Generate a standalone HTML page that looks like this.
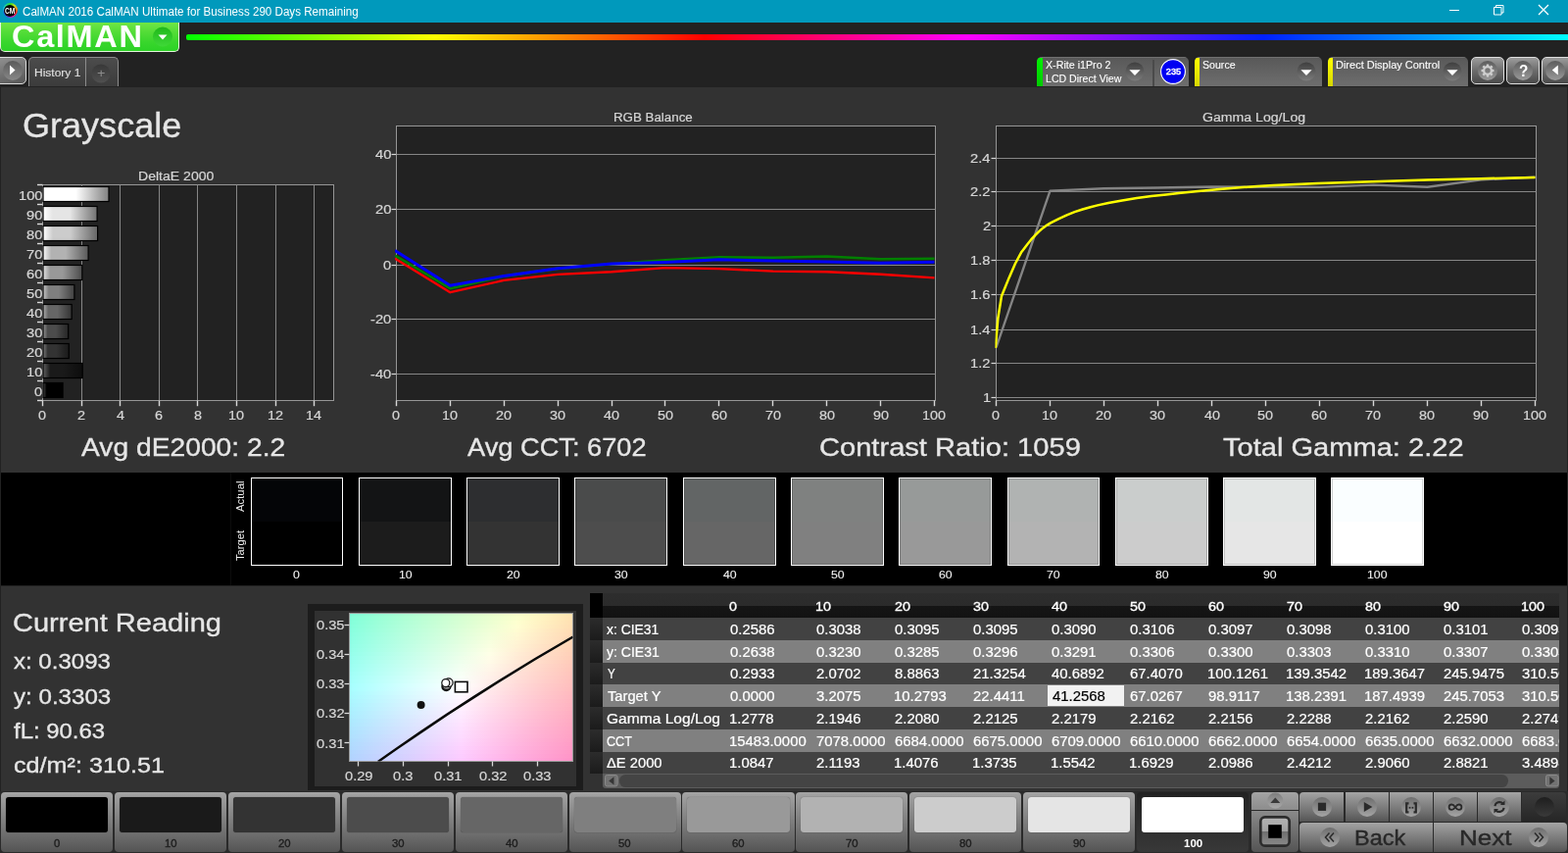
<!DOCTYPE html>
<html lang="en">
<head>
<meta charset="utf-8">
<title>CalMAN 2016 - Grayscale</title>
<style>
html,body{margin:0;padding:0;background:#222;}
body{width:1600px;height:870px;overflow:hidden;font-family:"Liberation Sans",sans-serif;}
#app{position:relative;width:1600px;height:870px;overflow:hidden;will-change:transform;}
.t{position:absolute;white-space:nowrap;line-height:1;transform-origin:0 0;}
svg{position:absolute;overflow:visible;}
svg text{font-family:"Liberation Sans",sans-serif;}

</style>
</head>
<body>
<div id="app">
<div style="position:absolute;left:0px;top:0px;width:1600px;height:23px;background:#0099bc;"></div>
<div style="position:absolute;left:2.7px;top:3.3px;width:15.2px;height:15.2px;border-radius:50%;background:conic-gradient(from 0deg,#30e020 0deg,#c0e020 40deg,#ff9010 75deg,#ff2020 115deg,#e020c0 160deg,#7030f0 200deg,#2050ff 240deg,#20d0e0 290deg,#30e020 360deg);"></div>
<div style="position:absolute;left:4.3px;top:4.9px;width:12px;height:12px;border-radius:50%;background:#040404;"></div>
<div class="t" style="left:5.33px;top:8px;font-size:8.14px;color:#ffffff;transform:scaleX(0.8162);font-weight:bold;">CM</div>
<div class="t" style="left:23.32px;top:6px;font-size:12.65px;color:#ffffff;transform:scaleX(0.9187);">CalMAN 2016 CalMAN Ultimate for Business 290 Days Remaining</div>
<svg style="left:1470px;top:0" width="130" height="23" viewBox="0 0 130 23" fill="none" stroke="#fff" stroke-width="1">
<path d="M9 10.5H19"/>
<path d="M54.500 7.500h7.500v7.500h-7.500z M56.500 7.500v-2h7.500v7.500h-2"/>
<path d="M100 5l10 10M110 5l-10 10" stroke-width="1.250"/></svg>
<div style="position:absolute;left:0px;top:23px;width:1600px;height:65px;background:#222222;"></div>
<div style="position:absolute;left:190px;top:35.3px;width:1410px;height:5.4px;background:linear-gradient(90deg,#00ff00 0%,#ffff00 18%,#ff0000 37.5%,#ff00ff 56.5%,#0020ff 78%,#00ffff 100%);border-radius:2px 0 0 2px;"></div>
<div style="position:absolute;left:0px;top:23px;width:183px;height:29.6px;background:linear-gradient(#70e645 0%,#52dc37 35%,#38d62c 70%,#2cd226 100%);border:1px solid #e4f6dc;border-top:none;border-radius:0 0 5px 5px;box-sizing:border-box;"></div>
<div class="t" style="left:12.10px;top:22px;font-size:31.4px;color:#ffffff;transform:scaleX(1.0355);font-weight:bold;letter-spacing:1.6px;">CalMAN</div>
<svg style="left:155px;top:27px" width="22" height="22" viewBox="0 0 22 22">
<defs><linearGradient id="cmg" x1="0" y1="0" x2="0" y2="1"><stop offset="0" stop-color="#1fb81a"/><stop offset="1" stop-color="#3fd838"/></linearGradient></defs>
<circle cx="11" cy="10.5" r="10" fill="url(#cmg)"/><path d="M6.5 8.5h9l-4.5 5z" fill="#fff"/></svg>
<div style="position:absolute;left:-2px;top:58px;width:29px;height:28px;background:linear-gradient(160deg,#909090,#565656);border:1px solid #dcdcdc;border-radius:0 5px 5px 0;box-sizing:border-box;"></div>
<svg style="left:3px;top:62px" width="20" height="20" viewBox="0 0 20 20">
<defs><linearGradient id="pbg" x1="0" y1="0" x2="0" y2="1"><stop offset="0" stop-color="#5a5a5a"/><stop offset="1" stop-color="#888"/></linearGradient></defs>
<circle cx="10" cy="10" r="10" fill="url(#pbg)"/><path d="M7 4.5v10l5.5-5z" fill="#fff"/></svg>
<div style="position:absolute;left:29px;top:58px;width:92px;height:30.5px;background:linear-gradient(#4c4c4c,#3b3b3b);border:1px solid #8c8c8c;border-bottom:none;border-radius:5px 5px 0 0;box-sizing:border-box;"></div>
<div style="position:absolute;left:87px;top:59px;width:1px;height:29.5px;background:#8c8c8c;"></div>
<div class="t" style="left:34.64px;top:68px;font-size:11.63px;color:#e0e0e0;transform:scaleX(1.0332);-webkit-text-stroke:0.1px #e0e0e0;">History 1</div>
<svg style="left:93px;top:65px" width="20" height="20" viewBox="0 0 20 20">
<defs><linearGradient id="plg" x1="0" y1="0" x2="0" y2="1"><stop offset="0" stop-color="#383838"/><stop offset="1" stop-color="#505050"/></linearGradient></defs>
<circle cx="10" cy="10" r="9.5" fill="url(#plg)"/></svg>
<div class="t" style="left:98.88px;top:70px;font-size:11.92px;color:#8c8c8c;transform:scaleX(1.2108);">+</div>
<svg width="0" height="0" style="left:0;top:0"><defs><linearGradient id="ddg" x1="0" y1="0" x2="0" y2="1"><stop offset="0" stop-color="#3e3e3e"/><stop offset="1" stop-color="#7c7c7c"/></linearGradient></defs></svg>
<div style="position:absolute;left:1058.4px;top:58px;width:154.6px;height:30px;background:linear-gradient(#7c7c7c 0,#595959 1.5px,#6e6e6e 100%);border-radius:5px 5px 0 0;overflow:hidden;"><div style="position:absolute;left:0;top:1px;width:5.2px;height:29px;background:linear-gradient(#00f000,#00cc00)"></div><div style="position:absolute;left:118px;top:3px;width:2px;height:27px;background:#4a4a4a"></div></div>
<div class="t" style="left:1066.83px;top:61px;font-size:11.05px;color:#ffffff;transform:scaleX(0.9668);-webkit-text-stroke:0.1px #ffffff;">X-Rite i1Pro 2</div>
<div class="t" style="left:1066.65px;top:75px;font-size:11.05px;color:#ffffff;transform:scaleX(0.9575);-webkit-text-stroke:0.1px #ffffff;">LCD Direct View</div>
<svg style="left:1147.6px;top:63.2px" width="20" height="20" viewBox="0 0 20 20">
<circle cx="10" cy="10" r="9.500" fill="url(#ddg)"/><path d="M4.400 8.300h11.200l-5.600 5.800z" fill="#fff"/></svg>
<svg style="left:1184.300px;top:60px" width="26" height="26" viewBox="0 0 26 26"><circle cx="13" cy="13" r="12.400" fill="#0000f2" stroke="#fff" stroke-width="1.100"/></svg>
<div class="t" style="left:1189.84px;top:69px;font-size:9.16px;color:#ffffff;-webkit-text-stroke:0.45px #ffffff;">235</div>
<div style="position:absolute;left:1219px;top:58px;width:129.5px;height:30px;background:linear-gradient(#7c7c7c 0,#595959 1.5px,#6e6e6e 100%);border-radius:5px 5px 0 0;overflow:hidden;"><div style="position:absolute;left:0;top:1px;width:5.2px;height:29px;background:linear-gradient(#ffff00,#d6d600)"></div></div>
<div class="t" style="left:1227.12px;top:61px;font-size:11.05px;color:#ffffff;transform:scaleX(0.9594);-webkit-text-stroke:0.1px #ffffff;">Source</div>
<svg style="left:1322.6px;top:63.2px" width="20" height="20" viewBox="0 0 20 20">
<circle cx="10" cy="10" r="9.500" fill="url(#ddg)"/><path d="M4.400 8.300h11.200l-5.600 5.800z" fill="#fff"/></svg>
<div style="position:absolute;left:1354.5px;top:58px;width:143.5px;height:30px;background:linear-gradient(#7c7c7c 0,#595959 1.5px,#6e6e6e 100%);border-radius:5px 5px 0 0;overflow:hidden;"><div style="position:absolute;left:0;top:1px;width:5.2px;height:29px;background:linear-gradient(#ffff00,#d6d600)"></div></div>
<div class="t" style="left:1362.87px;top:61px;font-size:11.05px;color:#ffffff;transform:scaleX(0.9943);-webkit-text-stroke:0.1px #ffffff;">Direct Display Control</div>
<svg style="left:1471.9px;top:63.2px" width="20" height="20" viewBox="0 0 20 20">
<circle cx="10" cy="10" r="9.500" fill="url(#ddg)"/><path d="M4.400 8.300h11.200l-5.600 5.800z" fill="#fff"/></svg>
<div style="position:absolute;left:1501px;top:58px;width:34px;height:28px;background:linear-gradient(#9c9c9c,#6c6c6c 50%,#4a4a4a);border:1px solid #dedede;border-radius:5px;box-sizing:border-box;"></div>
<div style="position:absolute;left:1537px;top:58px;width:34px;height:28px;background:linear-gradient(#9c9c9c,#6c6c6c 50%,#4a4a4a);border:1px solid #dedede;border-radius:5px;box-sizing:border-box;"></div>
<div style="position:absolute;left:1573px;top:58px;width:34px;height:28px;background:linear-gradient(#9c9c9c,#6c6c6c 50%,#4a4a4a);border:1px solid #dedede;border-radius:5px;box-sizing:border-box;"></div>
<svg width="0" height="0" style="left:0;top:0"><defs><linearGradient id="bcg" x1="0" y1="0" x2="0" y2="1"><stop offset="0" stop-color="#5c5c5c"/><stop offset="1" stop-color="#9a9a9a"/></linearGradient></defs></svg>
<svg style="left:1507.8px;top:62px" width="20" height="20" viewBox="0 0 20 20"><circle cx="10" cy="10" r="10" fill="url(#bcg)"/><g transform="translate(10,10)" fill="none" stroke="#cfcfcf"><circle r="3.900" stroke-width="2.300"/><path d="M0 -4.500V-6.500" stroke-width="2.500" transform="rotate(0)"/><path d="M0 -4.500V-6.500" stroke-width="2.500" transform="rotate(45)"/><path d="M0 -4.500V-6.500" stroke-width="2.500" transform="rotate(90)"/><path d="M0 -4.500V-6.500" stroke-width="2.500" transform="rotate(135)"/><path d="M0 -4.500V-6.500" stroke-width="2.500" transform="rotate(180)"/><path d="M0 -4.500V-6.500" stroke-width="2.500" transform="rotate(225)"/><path d="M0 -4.500V-6.500" stroke-width="2.500" transform="rotate(270)"/><path d="M0 -4.500V-6.500" stroke-width="2.500" transform="rotate(315)"/></g></svg>
<svg style="left:1544px;top:62px" width="20" height="20" viewBox="0 0 20 20"><circle cx="10" cy="10" r="10" fill="url(#bcg)"/></svg>
<div class="t" style="left:1549.51px;top:64px;font-size:16.28px;color:#ffffff;transform:scaleX(0.9394);font-weight:bold;">?</div>
<svg style="left:1577px;top:62px" width="20" height="20" viewBox="0 0 20 20"><circle cx="10" cy="10" r="10" fill="url(#bcg)"/><path d="M12.800 4.500v10l-6-5z" fill="#fff"/></svg>
<div style="position:absolute;left:0px;top:88px;width:1600px;height:394px;background:#222;"></div>
<div style="position:absolute;left:1px;top:89px;width:1598px;height:393px;background:#323232;"></div>
<div class="t" style="left:23.00px;top:111px;font-size:34.88px;color:#e6e6e6;transform:scaleX(1.0335);-webkit-text-stroke:0.35px #e6e6e6;">Grayscale</div>
<div class="t" style="left:83.25px;top:444px;font-size:25.58px;color:#e6e6e6;transform:scaleX(1.1034);-webkit-text-stroke:0.35px #e6e6e6;">Avg dE2000: 2.2</div>
<div class="t" style="left:477.40px;top:444px;font-size:25.58px;color:#e6e6e6;transform:scaleX(1.0644);-webkit-text-stroke:0.35px #e6e6e6;">Avg CCT: 6702</div>
<div class="t" style="left:835.55px;top:444px;font-size:25.58px;color:#e6e6e6;transform:scaleX(1.1373);-webkit-text-stroke:0.35px #e6e6e6;">Contrast Ratio: 1059</div>
<div class="t" style="left:1247.92px;top:444px;font-size:25.58px;color:#e6e6e6;transform:scaleX(1.1366);-webkit-text-stroke:0.35px #e6e6e6;">Total Gamma: 2.22</div>
<div class="t" style="left:141.37px;top:173px;font-size:13.52px;color:#d6d6d6;transform:scaleX(1.0402);-webkit-text-stroke:0.2px #d6d6d6;">DeltaE 2000</div>
<svg style="left:30px;top:180px" width="320" height="240" viewBox="30 180 320 240">
<defs>
<linearGradient id="bg100" x1="0" y1="0" x2="1" y2="0"><stop offset="0" stop-color="rgb(255,255,255)"/><stop offset="0.18" stop-color="rgb(255,255,255)"/><stop offset="0.5" stop-color="rgb(255,255,255)"/><stop offset="1" stop-color="rgb(128,128,128)"/></linearGradient>
<linearGradient id="bg90" x1="0" y1="0" x2="1" y2="0"><stop offset="0" stop-color="rgb(255,255,255)"/><stop offset="0.18" stop-color="rgb(229,229,229)"/><stop offset="0.5" stop-color="rgb(229,229,229)"/><stop offset="1" stop-color="rgb(114,114,114)"/></linearGradient>
<linearGradient id="bg80" x1="0" y1="0" x2="1" y2="0"><stop offset="0" stop-color="rgb(255,255,255)"/><stop offset="0.18" stop-color="rgb(204,204,204)"/><stop offset="0.5" stop-color="rgb(204,204,204)"/><stop offset="1" stop-color="rgb(102,102,102)"/></linearGradient>
<linearGradient id="bg70" x1="0" y1="0" x2="1" y2="0"><stop offset="0" stop-color="rgb(248,248,248)"/><stop offset="0.18" stop-color="rgb(178,178,178)"/><stop offset="0.5" stop-color="rgb(178,178,178)"/><stop offset="1" stop-color="rgb(89,89,89)"/></linearGradient>
<linearGradient id="bg60" x1="0" y1="0" x2="1" y2="0"><stop offset="0" stop-color="rgb(223,223,223)"/><stop offset="0.18" stop-color="rgb(153,153,153)"/><stop offset="0.5" stop-color="rgb(153,153,153)"/><stop offset="1" stop-color="rgb(76,76,76)"/></linearGradient>
<linearGradient id="bg50" x1="0" y1="0" x2="1" y2="0"><stop offset="0" stop-color="rgb(197,197,197)"/><stop offset="0.18" stop-color="rgb(127,127,127)"/><stop offset="0.5" stop-color="rgb(127,127,127)"/><stop offset="1" stop-color="rgb(64,64,64)"/></linearGradient>
<linearGradient id="bg40" x1="0" y1="0" x2="1" y2="0"><stop offset="0" stop-color="rgb(172,172,172)"/><stop offset="0.18" stop-color="rgb(102,102,102)"/><stop offset="0.5" stop-color="rgb(102,102,102)"/><stop offset="1" stop-color="rgb(51,51,51)"/></linearGradient>
<linearGradient id="bg30" x1="0" y1="0" x2="1" y2="0"><stop offset="0" stop-color="rgb(146,146,146)"/><stop offset="0.18" stop-color="rgb(76,76,76)"/><stop offset="0.5" stop-color="rgb(76,76,76)"/><stop offset="1" stop-color="rgb(38,38,38)"/></linearGradient>
<linearGradient id="bg20" x1="0" y1="0" x2="1" y2="0"><stop offset="0" stop-color="rgb(121,121,121)"/><stop offset="0.18" stop-color="rgb(51,51,51)"/><stop offset="0.5" stop-color="rgb(51,51,51)"/><stop offset="1" stop-color="rgb(26,26,26)"/></linearGradient>
<linearGradient id="bg10" x1="0" y1="0" x2="1" y2="0"><stop offset="0" stop-color="rgb(96,96,96)"/><stop offset="0.18" stop-color="rgb(26,26,26)"/><stop offset="0.5" stop-color="rgb(26,26,26)"/><stop offset="1" stop-color="rgb(13,13,13)"/></linearGradient>
<linearGradient id="bg0" x1="0" y1="0" x2="1" y2="0"><stop offset="0" stop-color="rgb(70,70,70)"/><stop offset="0.18" stop-color="rgb(0,0,0)"/><stop offset="0.5" stop-color="rgb(0,0,0)"/><stop offset="1" stop-color="rgb(0,0,0)"/></linearGradient>
</defs>
<rect x="43.5" y="188.5" width="297.0" height="220.0" fill="#222222" stroke="#969696" stroke-width="1"/>
<path d="M83.5 188.5V408.5" stroke="#868686" stroke-width="1"/>
<path d="M122.5 188.5V408.5" stroke="#868686" stroke-width="1"/>
<path d="M162.5 188.5V408.5" stroke="#868686" stroke-width="1"/>
<path d="M201.5 188.5V408.5" stroke="#868686" stroke-width="1"/>
<path d="M241.5 188.5V408.5" stroke="#868686" stroke-width="1"/>
<path d="M281.5 188.5V408.5" stroke="#868686" stroke-width="1"/>
<path d="M320.5 188.5V408.5" stroke="#868686" stroke-width="1"/>
<path d="M43.5 408.5V414.2" stroke="#d8d8d8" stroke-width="1.4"/>
<path d="M83.5 408.5V414.2" stroke="#d8d8d8" stroke-width="1.4"/>
<path d="M122.5 408.5V414.2" stroke="#d8d8d8" stroke-width="1.4"/>
<path d="M162.5 408.5V414.2" stroke="#d8d8d8" stroke-width="1.4"/>
<path d="M201.5 408.5V414.2" stroke="#d8d8d8" stroke-width="1.4"/>
<path d="M241.5 408.5V414.2" stroke="#d8d8d8" stroke-width="1.4"/>
<path d="M281.5 408.5V414.2" stroke="#d8d8d8" stroke-width="1.4"/>
<path d="M320.5 408.5V414.2" stroke="#d8d8d8" stroke-width="1.4"/>
<path d="M38 188.5H43.5" stroke="#d8d8d8" stroke-width="1.4"/>
<path d="M38 208.5H43.5" stroke="#d8d8d8" stroke-width="1.4"/>
<path d="M38 228.5H43.5" stroke="#d8d8d8" stroke-width="1.4"/>
<path d="M38 248.5H43.5" stroke="#d8d8d8" stroke-width="1.4"/>
<path d="M38 268.5H43.5" stroke="#d8d8d8" stroke-width="1.4"/>
<path d="M38 288.5H43.5" stroke="#d8d8d8" stroke-width="1.4"/>
<path d="M38 308.5H43.5" stroke="#d8d8d8" stroke-width="1.4"/>
<path d="M38 328.5H43.5" stroke="#d8d8d8" stroke-width="1.4"/>
<path d="M38 348.5H43.5" stroke="#d8d8d8" stroke-width="1.4"/>
<path d="M38 368.5H43.5" stroke="#d8d8d8" stroke-width="1.4"/>
<path d="M38 388.5H43.5" stroke="#d8d8d8" stroke-width="1.4"/>
<path d="M38 408.5H43.5" stroke="#d8d8d8" stroke-width="1.4"/>
<rect x="44.0" y="190.5" width="67.0" height="15" fill="url(#bg100)" stroke="#000" stroke-width="1.2"/>
<rect x="44.0" y="210.5" width="55.1" height="15" fill="url(#bg90)" stroke="#000" stroke-width="1.2"/>
<rect x="44.0" y="230.5" width="55.6" height="15" fill="url(#bg80)" stroke="#000" stroke-width="1.2"/>
<rect x="44.0" y="250.5" width="46.1" height="15" fill="url(#bg70)" stroke="#000" stroke-width="1.2"/>
<rect x="44.0" y="270.5" width="39.8" height="15" fill="url(#bg60)" stroke="#000" stroke-width="1.2"/>
<rect x="44.0" y="290.5" width="31.9" height="15" fill="url(#bg50)" stroke="#000" stroke-width="1.2"/>
<rect x="44.0" y="310.5" width="29.2" height="15" fill="url(#bg40)" stroke="#000" stroke-width="1.2"/>
<rect x="44.0" y="330.5" width="25.7" height="15" fill="url(#bg30)" stroke="#000" stroke-width="1.2"/>
<rect x="44.0" y="350.5" width="26.3" height="15" fill="url(#bg20)" stroke="#000" stroke-width="1.2"/>
<rect x="44.0" y="370.5" width="40.2" height="15" fill="url(#bg10)" stroke="#000" stroke-width="1.2"/>
<rect x="44.0" y="390.5" width="20.1" height="15" fill="url(#bg0)" stroke="#000" stroke-width="1.2"/>
</svg>
<div class="t" style="left:18.56px;top:194px;font-size:12.5px;color:#d6d6d6;transform:scaleX(1.1700);-webkit-text-stroke:0.2px #d6d6d6;">100</div>
<div class="t" style="left:26.68px;top:214px;font-size:12.5px;color:#d6d6d6;transform:scaleX(1.1700);-webkit-text-stroke:0.2px #d6d6d6;">90</div>
<div class="t" style="left:26.68px;top:234px;font-size:12.5px;color:#d6d6d6;transform:scaleX(1.1700);-webkit-text-stroke:0.2px #d6d6d6;">80</div>
<div class="t" style="left:26.68px;top:254px;font-size:12.5px;color:#d6d6d6;transform:scaleX(1.1700);-webkit-text-stroke:0.2px #d6d6d6;">70</div>
<div class="t" style="left:26.68px;top:274px;font-size:12.5px;color:#d6d6d6;transform:scaleX(1.1700);-webkit-text-stroke:0.2px #d6d6d6;">60</div>
<div class="t" style="left:26.68px;top:294px;font-size:12.5px;color:#d6d6d6;transform:scaleX(1.1700);-webkit-text-stroke:0.2px #d6d6d6;">50</div>
<div class="t" style="left:26.68px;top:314px;font-size:12.5px;color:#d6d6d6;transform:scaleX(1.1700);-webkit-text-stroke:0.2px #d6d6d6;">40</div>
<div class="t" style="left:26.68px;top:334px;font-size:12.5px;color:#d6d6d6;transform:scaleX(1.1700);-webkit-text-stroke:0.2px #d6d6d6;">30</div>
<div class="t" style="left:26.68px;top:354px;font-size:12.5px;color:#d6d6d6;transform:scaleX(1.1700);-webkit-text-stroke:0.2px #d6d6d6;">20</div>
<div class="t" style="left:26.68px;top:374px;font-size:12.5px;color:#d6d6d6;transform:scaleX(1.1700);-webkit-text-stroke:0.2px #d6d6d6;">10</div>
<div class="t" style="left:34.79px;top:394px;font-size:12.5px;color:#d6d6d6;transform:scaleX(1.1700);-webkit-text-stroke:0.2px #d6d6d6;">0</div>
<div class="t" style="left:39.47px;top:418px;font-size:12.21px;color:#d6d6d6;transform:scaleX(1.1800);-webkit-text-stroke:0.2px #d6d6d6;">0</div>
<div class="t" style="left:79.10px;top:418px;font-size:12.21px;color:#d6d6d6;transform:scaleX(1.1800);-webkit-text-stroke:0.2px #d6d6d6;">2</div>
<div class="t" style="left:118.77px;top:418px;font-size:12.21px;color:#d6d6d6;transform:scaleX(1.1800);-webkit-text-stroke:0.2px #d6d6d6;">4</div>
<div class="t" style="left:158.23px;top:418px;font-size:12.21px;color:#d6d6d6;transform:scaleX(1.1800);-webkit-text-stroke:0.2px #d6d6d6;">6</div>
<div class="t" style="left:197.87px;top:418px;font-size:12.21px;color:#d6d6d6;transform:scaleX(1.1800);-webkit-text-stroke:0.2px #d6d6d6;">8</div>
<div class="t" style="left:233.22px;top:418px;font-size:12.21px;color:#d6d6d6;transform:scaleX(1.1800);-webkit-text-stroke:0.2px #d6d6d6;">10</div>
<div class="t" style="left:272.92px;top:418px;font-size:12.21px;color:#d6d6d6;transform:scaleX(1.1800);-webkit-text-stroke:0.2px #d6d6d6;">12</div>
<div class="t" style="left:312.38px;top:418px;font-size:12.21px;color:#d6d6d6;transform:scaleX(1.1800);-webkit-text-stroke:0.2px #d6d6d6;">14</div>
<div class="t" style="left:625.83px;top:113px;font-size:13.52px;color:#d6d6d6;transform:scaleX(0.9858);-webkit-text-stroke:0.2px #d6d6d6;">RGB Balance</div>
<svg style="left:370px;top:110px" width="600" height="310" viewBox="370 110 600 310">
<rect x="404.5" y="128.5" width="550.0" height="280.0" fill="#222222" stroke="#969696" stroke-width="1"/>
<path d="M399.5 157.5H404.5" stroke="#d8d8d8" stroke-width="1.2"/>
<path d="M404.5 157.5H954.5" stroke="#868686" stroke-width="1"/>
<path d="M399.5 213.5H404.5" stroke="#d8d8d8" stroke-width="1.2"/>
<path d="M404.5 213.5H954.5" stroke="#868686" stroke-width="1"/>
<path d="M399.5 270.5H404.5" stroke="#d8d8d8" stroke-width="1.2"/>
<path d="M404.5 270.5H954.5" stroke="#868686" stroke-width="1"/>
<path d="M399.5 325.5H404.5" stroke="#d8d8d8" stroke-width="1.2"/>
<path d="M404.5 325.5H954.5" stroke="#868686" stroke-width="1"/>
<path d="M399.5 381.5H404.5" stroke="#d8d8d8" stroke-width="1.2"/>
<path d="M404.5 381.5H954.5" stroke="#868686" stroke-width="1"/>
<path d="M404.5 408.5V414.2" stroke="#d8d8d8" stroke-width="1.4"/>
<path d="M459.5 408.5V414.2" stroke="#d8d8d8" stroke-width="1.4"/>
<path d="M514.5 408.5V414.2" stroke="#d8d8d8" stroke-width="1.4"/>
<path d="M569.5 408.5V414.2" stroke="#d8d8d8" stroke-width="1.4"/>
<path d="M624.5 408.5V414.2" stroke="#d8d8d8" stroke-width="1.4"/>
<path d="M678.5 408.5V414.2" stroke="#d8d8d8" stroke-width="1.4"/>
<path d="M733.5 408.5V414.2" stroke="#d8d8d8" stroke-width="1.4"/>
<path d="M788.5 408.5V414.2" stroke="#d8d8d8" stroke-width="1.4"/>
<path d="M843.5 408.5V414.2" stroke="#d8d8d8" stroke-width="1.4"/>
<path d="M898.5 408.5V414.2" stroke="#d8d8d8" stroke-width="1.4"/>
<path d="M953.5 408.5V414.2" stroke="#d8d8d8" stroke-width="1.4"/>
<clipPath id="cp2"><rect x="403.0" y="128.5" width="551.0" height="280.0"/></clipPath>
<polyline points="403.0,263.5 459.4,298.2 514.3,285.9 569.2,279.9 624.1,277.2 679.0,273.1 733.9,274.1 788.8,276.6 843.7,277.2 898.6,279.7 953.5,283.4" fill="none" stroke="#ff0000" stroke-width="2.4" stroke-linejoin="round" clip-path="url(#cp2)"/>
<polyline points="403.0,260.6 459.4,294.2 514.3,281.6 569.2,273.9 624.1,269.2 679.0,265.2 733.9,262.3 788.8,262.8 843.7,261.5 898.6,264.2 953.5,263.8" fill="none" stroke="#008000" stroke-width="2.6" stroke-linejoin="round" clip-path="url(#cp2)"/>
<polyline points="403.0,255.4 459.4,291.3 514.3,281.4 569.2,273.7 624.1,269.0 679.0,267.4 733.9,264.8 788.8,266.1 843.7,266.9 898.6,268.3 953.5,267.3" fill="none" stroke="#0000ff" stroke-width="3" stroke-linejoin="round" clip-path="url(#cp2)"/>
</svg>
<div class="t" style="left:383.10px;top:152px;font-size:12.35px;color:#d6d6d6;transform:scaleX(1.1900);-webkit-text-stroke:0.2px #d6d6d6;">40</div>
<div class="t" style="left:383.10px;top:208px;font-size:12.35px;color:#d6d6d6;transform:scaleX(1.1900);-webkit-text-stroke:0.2px #d6d6d6;">20</div>
<div class="t" style="left:391.26px;top:265px;font-size:12.35px;color:#d6d6d6;transform:scaleX(1.1900);-webkit-text-stroke:0.2px #d6d6d6;">0</div>
<div class="t" style="left:378.18px;top:320px;font-size:12.35px;color:#d6d6d6;transform:scaleX(1.1900);-webkit-text-stroke:0.2px #d6d6d6;">-20</div>
<div class="t" style="left:378.18px;top:376px;font-size:12.35px;color:#d6d6d6;transform:scaleX(1.1900);-webkit-text-stroke:0.2px #d6d6d6;">-40</div>
<div class="t" style="left:400.47px;top:418px;font-size:12.21px;color:#d6d6d6;transform:scaleX(1.1800);-webkit-text-stroke:0.2px #d6d6d6;">0</div>
<div class="t" style="left:451.12px;top:418px;font-size:12.21px;color:#d6d6d6;transform:scaleX(1.1800);-webkit-text-stroke:0.2px #d6d6d6;">10</div>
<div class="t" style="left:506.20px;top:418px;font-size:12.21px;color:#d6d6d6;transform:scaleX(1.1800);-webkit-text-stroke:0.2px #d6d6d6;">20</div>
<div class="t" style="left:561.17px;top:418px;font-size:12.21px;color:#d6d6d6;transform:scaleX(1.1800);-webkit-text-stroke:0.2px #d6d6d6;">30</div>
<div class="t" style="left:616.21px;top:418px;font-size:12.21px;color:#d6d6d6;transform:scaleX(1.1800);-webkit-text-stroke:0.2px #d6d6d6;">40</div>
<div class="t" style="left:670.97px;top:418px;font-size:12.21px;color:#d6d6d6;transform:scaleX(1.1800);-webkit-text-stroke:0.2px #d6d6d6;">50</div>
<div class="t" style="left:725.80px;top:418px;font-size:12.21px;color:#d6d6d6;transform:scaleX(1.1800);-webkit-text-stroke:0.2px #d6d6d6;">60</div>
<div class="t" style="left:780.70px;top:418px;font-size:12.21px;color:#d6d6d6;transform:scaleX(1.1800);-webkit-text-stroke:0.2px #d6d6d6;">70</div>
<div class="t" style="left:835.63px;top:418px;font-size:12.21px;color:#d6d6d6;transform:scaleX(1.1800);-webkit-text-stroke:0.2px #d6d6d6;">80</div>
<div class="t" style="left:890.53px;top:418px;font-size:12.21px;color:#d6d6d6;transform:scaleX(1.1800);-webkit-text-stroke:0.2px #d6d6d6;">90</div>
<div class="t" style="left:941.22px;top:418px;font-size:12.21px;color:#d6d6d6;transform:scaleX(1.1800);-webkit-text-stroke:0.2px #d6d6d6;">100</div>
<div class="t" style="left:1226.79px;top:113px;font-size:13.52px;color:#d6d6d6;transform:scaleX(1.0437);-webkit-text-stroke:0.2px #d6d6d6;">Gamma Log/Log</div>
<svg style="left:980px;top:110px" width="620" height="310" viewBox="980 110 620 310">
<rect x="1016.5" y="128.5" width="551.0" height="280.0" fill="#222222" stroke="#969696" stroke-width="1"/>
<path d="M1011.5 161.5H1016.5" stroke="#d8d8d8" stroke-width="1.2"/>
<path d="M1016.5 161.5H1567.5" stroke="#868686" stroke-width="1"/>
<path d="M1011.5 195.5H1016.5" stroke="#d8d8d8" stroke-width="1.2"/>
<path d="M1016.5 195.5H1567.5" stroke="#868686" stroke-width="1"/>
<path d="M1011.5 230.5H1016.5" stroke="#d8d8d8" stroke-width="1.2"/>
<path d="M1016.5 230.5H1567.5" stroke="#868686" stroke-width="1"/>
<path d="M1011.5 265.5H1016.5" stroke="#d8d8d8" stroke-width="1.2"/>
<path d="M1016.5 265.5H1567.5" stroke="#868686" stroke-width="1"/>
<path d="M1011.5 300.5H1016.5" stroke="#d8d8d8" stroke-width="1.2"/>
<path d="M1016.5 300.5H1567.5" stroke="#868686" stroke-width="1"/>
<path d="M1011.5 336.5H1016.5" stroke="#d8d8d8" stroke-width="1.2"/>
<path d="M1016.5 336.5H1567.5" stroke="#868686" stroke-width="1"/>
<path d="M1011.5 370.5H1016.5" stroke="#d8d8d8" stroke-width="1.2"/>
<path d="M1016.5 370.5H1567.5" stroke="#868686" stroke-width="1"/>
<path d="M1011.5 405.5H1016.5" stroke="#d8d8d8" stroke-width="1.2"/>
<path d="M1016.5 405.5H1567.5" stroke="#868686" stroke-width="1"/>
<path d="M1016.5 408.5V414.2" stroke="#d8d8d8" stroke-width="1.4"/>
<path d="M1071.5 408.5V414.2" stroke="#d8d8d8" stroke-width="1.4"/>
<path d="M1126.5 408.5V414.2" stroke="#d8d8d8" stroke-width="1.4"/>
<path d="M1181.5 408.5V414.2" stroke="#d8d8d8" stroke-width="1.4"/>
<path d="M1236.5 408.5V414.2" stroke="#d8d8d8" stroke-width="1.4"/>
<path d="M1291.5 408.5V414.2" stroke="#d8d8d8" stroke-width="1.4"/>
<path d="M1346.5 408.5V414.2" stroke="#d8d8d8" stroke-width="1.4"/>
<path d="M1401.5 408.5V414.2" stroke="#d8d8d8" stroke-width="1.4"/>
<path d="M1456.5 408.5V414.2" stroke="#d8d8d8" stroke-width="1.4"/>
<path d="M1511.5 408.5V414.2" stroke="#d8d8d8" stroke-width="1.4"/>
<path d="M1566.5 408.5V414.2" stroke="#d8d8d8" stroke-width="1.4"/>
<clipPath id="cp3"><rect x="1015.5" y="128.5" width="553.0" height="280.0"/></clipPath>
<polyline points="1016.5,354.4 1071.5,194.6 1126.5,192.2 1181.5,191.5 1236.5,190.5 1291.5,190.8 1346.5,190.9 1401.5,188.6 1456.5,190.8 1511.5,183.4 1566.5,180.6" fill="none" stroke="#848484" stroke-width="2.4" stroke-linejoin="round" clip-path="url(#cp3)"/>
<polyline points="1015.8,355.0 1018.3,324.8 1022.0,302.0 1029.6,283.4 1035.9,269.0 1042.0,257.6 1048.3,249.2 1052.3,244.2 1056.4,239.8 1060.4,235.9 1064.4,232.4 1068.4,229.6 1072.5,227.1 1080.5,223.1 1088.6,219.3 1096.6,216.1 1104.7,213.5 1112.7,211.2 1120.0,209.4 1131.0,207.0 1145.0,204.5 1160.0,202.1 1175.0,200.1 1190.0,198.4 1205.0,196.8 1220.0,195.3 1236.5,193.7 1250.0,192.5 1268.0,191.1 1283.0,190.1 1300.0,189.1 1345.0,187.0 1400.0,185.2 1456.0,183.6 1511.0,182.2 1566.5,180.9" fill="none" stroke="#ffff00" stroke-width="2.5" stroke-linejoin="round" clip-path="url(#cp3)"/>
</svg>
<div class="t" style="left:990.01px;top:156px;font-size:12.35px;color:#d6d6d6;transform:scaleX(1.1900);-webkit-text-stroke:0.2px #d6d6d6;">2.4</div>
<div class="t" style="left:990.31px;top:190px;font-size:12.35px;color:#d6d6d6;transform:scaleX(1.1900);-webkit-text-stroke:0.2px #d6d6d6;">2.2</div>
<div class="t" style="left:1002.58px;top:225px;font-size:12.35px;color:#d6d6d6;transform:scaleX(1.1900);-webkit-text-stroke:0.2px #d6d6d6;">2</div>
<div class="t" style="left:990.16px;top:260px;font-size:12.35px;color:#d6d6d6;transform:scaleX(1.1900);-webkit-text-stroke:0.2px #d6d6d6;">1.8</div>
<div class="t" style="left:990.16px;top:295px;font-size:12.35px;color:#d6d6d6;transform:scaleX(1.1900);-webkit-text-stroke:0.2px #d6d6d6;">1.6</div>
<div class="t" style="left:990.01px;top:331px;font-size:12.35px;color:#d6d6d6;transform:scaleX(1.1900);-webkit-text-stroke:0.2px #d6d6d6;">1.4</div>
<div class="t" style="left:990.31px;top:365px;font-size:12.35px;color:#d6d6d6;transform:scaleX(1.1900);-webkit-text-stroke:0.2px #d6d6d6;">1.2</div>
<div class="t" style="left:1002.50px;top:400px;font-size:12.35px;color:#d6d6d6;transform:scaleX(1.1900);-webkit-text-stroke:0.2px #d6d6d6;">1</div>
<div class="t" style="left:1012.47px;top:418px;font-size:12.21px;color:#d6d6d6;transform:scaleX(1.1800);-webkit-text-stroke:0.2px #d6d6d6;">0</div>
<div class="t" style="left:1063.22px;top:418px;font-size:12.21px;color:#d6d6d6;transform:scaleX(1.1800);-webkit-text-stroke:0.2px #d6d6d6;">10</div>
<div class="t" style="left:1118.40px;top:418px;font-size:12.21px;color:#d6d6d6;transform:scaleX(1.1800);-webkit-text-stroke:0.2px #d6d6d6;">20</div>
<div class="t" style="left:1173.47px;top:418px;font-size:12.21px;color:#d6d6d6;transform:scaleX(1.1800);-webkit-text-stroke:0.2px #d6d6d6;">30</div>
<div class="t" style="left:1228.61px;top:418px;font-size:12.21px;color:#d6d6d6;transform:scaleX(1.1800);-webkit-text-stroke:0.2px #d6d6d6;">40</div>
<div class="t" style="left:1283.47px;top:418px;font-size:12.21px;color:#d6d6d6;transform:scaleX(1.1800);-webkit-text-stroke:0.2px #d6d6d6;">50</div>
<div class="t" style="left:1338.40px;top:418px;font-size:12.21px;color:#d6d6d6;transform:scaleX(1.1800);-webkit-text-stroke:0.2px #d6d6d6;">60</div>
<div class="t" style="left:1393.40px;top:418px;font-size:12.21px;color:#d6d6d6;transform:scaleX(1.1800);-webkit-text-stroke:0.2px #d6d6d6;">70</div>
<div class="t" style="left:1448.43px;top:418px;font-size:12.21px;color:#d6d6d6;transform:scaleX(1.1800);-webkit-text-stroke:0.2px #d6d6d6;">80</div>
<div class="t" style="left:1503.43px;top:418px;font-size:12.21px;color:#d6d6d6;transform:scaleX(1.1800);-webkit-text-stroke:0.2px #d6d6d6;">90</div>
<div class="t" style="left:1554.22px;top:418px;font-size:12.21px;color:#d6d6d6;transform:scaleX(1.1800);-webkit-text-stroke:0.2px #d6d6d6;">100</div>
<div style="position:absolute;left:1px;top:482px;width:1598px;height:115px;background:#000;"></div>
<div style="position:absolute;left:235px;top:482px;width:1px;height:115px;background:#0c0c0c;"></div>
<div style="position:absolute;left:256px;top:487px;width:94px;height:90px;border:1px solid #fff;box-sizing:border-box;box-shadow:inset 0 0 0 1px rgba(0,0,0,0.17);background:linear-gradient(#040507 0,#040507 50%,#000000 50%,#000000 100%);"></div>
<div class="t" style="left:299.35px;top:581px;font-size:10.9px;color:#f0f0f0;transform:scaleX(1.1300);-webkit-text-stroke:0.1px #f0f0f0;">0</div>
<div style="position:absolute;left:366px;top:487px;width:95px;height:90px;border:1px solid #fff;box-sizing:border-box;box-shadow:inset 0 0 0 1px rgba(0,0,0,0.17);background:linear-gradient(#131415 0,#131415 50%,#1c1c1c 50%,#1c1c1c 100%);"></div>
<div class="t" style="left:406.82px;top:581px;font-size:10.9px;color:#f0f0f0;transform:scaleX(1.1300);-webkit-text-stroke:0.1px #f0f0f0;">10</div>
<div style="position:absolute;left:476px;top:487px;width:95px;height:90px;border:1px solid #fff;box-sizing:border-box;box-shadow:inset 0 0 0 1px rgba(0,0,0,0.17);background:linear-gradient(#2d2e30 0,#2d2e30 50%,#333333 50%,#333333 100%);"></div>
<div class="t" style="left:516.97px;top:581px;font-size:10.9px;color:#f0f0f0;transform:scaleX(1.1300);-webkit-text-stroke:0.1px #f0f0f0;">20</div>
<div style="position:absolute;left:586px;top:487px;width:95px;height:90px;border:1px solid #fff;box-sizing:border-box;box-shadow:inset 0 0 0 1px rgba(0,0,0,0.17);background:linear-gradient(#4a4b4b 0,#4a4b4b 50%,#4d4d4d 50%,#4d4d4d 100%);"></div>
<div class="t" style="left:627.03px;top:581px;font-size:10.9px;color:#f0f0f0;transform:scaleX(1.1300);-webkit-text-stroke:0.1px #f0f0f0;">30</div>
<div style="position:absolute;left:697px;top:487px;width:94.5px;height:90px;border:1px solid #fff;box-sizing:border-box;box-shadow:inset 0 0 0 1px rgba(0,0,0,0.17);background:linear-gradient(#626565 0,#626565 50%,#666666 50%,#666666 100%);"></div>
<div class="t" style="left:737.91px;top:581px;font-size:10.9px;color:#f0f0f0;transform:scaleX(1.1300);-webkit-text-stroke:0.1px #f0f0f0;">40</div>
<div style="position:absolute;left:807px;top:487px;width:95px;height:90px;border:1px solid #fff;box-sizing:border-box;box-shadow:inset 0 0 0 1px rgba(0,0,0,0.17);background:linear-gradient(#7f8180 0,#7f8180 50%,#808080 50%,#808080 100%);"></div>
<div class="t" style="left:848.03px;top:581px;font-size:10.9px;color:#f0f0f0;transform:scaleX(1.1300);-webkit-text-stroke:0.1px #f0f0f0;">50</div>
<div style="position:absolute;left:917px;top:487px;width:95px;height:90px;border:1px solid #fff;box-sizing:border-box;box-shadow:inset 0 0 0 1px rgba(0,0,0,0.17);background:linear-gradient(#979a99 0,#979a99 50%,#999999 50%,#999999 100%);"></div>
<div class="t" style="left:957.97px;top:581px;font-size:10.9px;color:#f0f0f0;transform:scaleX(1.1300);-webkit-text-stroke:0.1px #f0f0f0;">60</div>
<div style="position:absolute;left:1028px;top:487px;width:94px;height:90px;border:1px solid #fff;box-sizing:border-box;box-shadow:inset 0 0 0 1px rgba(0,0,0,0.17);background:linear-gradient(#b0b3b2 0,#b0b3b2 50%,#b3b3b3 50%,#b3b3b3 100%);"></div>
<div class="t" style="left:1068.47px;top:581px;font-size:10.9px;color:#f0f0f0;transform:scaleX(1.1300);-webkit-text-stroke:0.1px #f0f0f0;">70</div>
<div style="position:absolute;left:1138px;top:487px;width:95px;height:90px;border:1px solid #fff;box-sizing:border-box;box-shadow:inset 0 0 0 1px rgba(0,0,0,0.17);background:linear-gradient(#cacdcc 0,#cacdcc 50%,#cccccc 50%,#cccccc 100%);"></div>
<div class="t" style="left:1179.00px;top:581px;font-size:10.9px;color:#f0f0f0;transform:scaleX(1.1300);-webkit-text-stroke:0.1px #f0f0f0;">80</div>
<div style="position:absolute;left:1248px;top:487px;width:95px;height:90px;border:1px solid #fff;box-sizing:border-box;box-shadow:inset 0 0 0 1px rgba(0,0,0,0.17);background:linear-gradient(#e3e6e5 0,#e3e6e5 50%,#e6e6e6 50%,#e6e6e6 100%);"></div>
<div class="t" style="left:1289.00px;top:581px;font-size:10.9px;color:#f0f0f0;transform:scaleX(1.1300);-webkit-text-stroke:0.1px #f0f0f0;">90</div>
<div style="position:absolute;left:1358px;top:487px;width:95px;height:90px;border:1px solid #fff;box-sizing:border-box;box-shadow:inset 0 0 0 1px rgba(0,0,0,0.17);background:linear-gradient(#fafeff 0,#fafeff 50%,#ffffff 50%,#ffffff 100%);"></div>
<div class="t" style="left:1395.40px;top:581px;font-size:10.9px;color:#f0f0f0;transform:scaleX(1.1300);-webkit-text-stroke:0.1px #f0f0f0;">100</div>
<div style="position:absolute;left:249px;top:521.95px;width:0;height:0;transform:rotate(-90deg);"><div class="t" style="left:-0.00px;top:-9px;font-size:11.05px;color:#f0f0f0;transform:scaleX(1.0252);">Actual</div></div>
<div style="position:absolute;left:249px;top:572.45px;width:0;height:0;transform:rotate(-90deg);"><div class="t" style="left:-0.22px;top:-9px;font-size:11.05px;color:#f0f0f0;transform:scaleX(1.0103);">Target</div></div>
<div style="position:absolute;left:0px;top:597px;width:1600px;height:211px;background:#222;"></div>
<div style="position:absolute;left:1px;top:597.5px;width:1598px;height:209.5px;background:#323232;"></div>
<div class="t" style="left:13.35px;top:623px;font-size:25.58px;color:#e6e6e6;transform:scaleX(1.1349);-webkit-text-stroke:0.35px #e6e6e6;">Current Reading</div>
<div class="t" style="left:14.26px;top:663px;font-size:22.82px;color:#e6e6e6;transform:scaleX(1.0532);-webkit-text-stroke:0.35px #e6e6e6;">x: 0.3093</div>
<div class="t" style="left:14.38px;top:699px;font-size:22.82px;color:#e6e6e6;transform:scaleX(1.0573);-webkit-text-stroke:0.35px #e6e6e6;">y: 0.3303</div>
<div class="t" style="left:14.24px;top:734px;font-size:22.82px;color:#e6e6e6;transform:scaleX(1.0490);-webkit-text-stroke:0.35px #e6e6e6;">fL: 90.63</div>
<div class="t" style="left:13.59px;top:769px;font-size:22.82px;color:#e6e6e6;transform:scaleX(1.1039);-webkit-text-stroke:0.35px #e6e6e6;">cd/m²: 310.51</div>
<div style="position:absolute;left:314px;top:616px;width:281px;height:190px;background:#1c1c1c;"></div>
<div style="position:absolute;left:321px;top:622.5px;width:267px;height:179.5px;background:#313131;"></div>
<svg style="left:321px;top:622px" width="267" height="180" viewBox="321 622 267 180">
<defs>
<linearGradient id="cg0" x1="0" y1="0" x2="1" y2="0"><stop offset="0.000" stop-color="#7fffd7"/><stop offset="0.125" stop-color="#97ffd5"/><stop offset="0.250" stop-color="#adffd3"/><stop offset="0.375" stop-color="#c1ffd2"/><stop offset="0.500" stop-color="#d4ffd0"/><stop offset="0.625" stop-color="#e7ffcd"/><stop offset="0.750" stop-color="#f9ffcb"/><stop offset="0.875" stop-color="#fff3bf"/><stop offset="1.000" stop-color="#ffe4b0"/></linearGradient>
<linearGradient id="cg1" x1="0" y1="0" x2="1" y2="0"><stop offset="0.000" stop-color="#81ffd9"/><stop offset="0.125" stop-color="#99ffd7"/><stop offset="0.250" stop-color="#afffd5"/><stop offset="0.375" stop-color="#c3ffd4"/><stop offset="0.500" stop-color="#d6ffd2"/><stop offset="0.625" stop-color="#e9ffd0"/><stop offset="0.750" stop-color="#fbffcd"/><stop offset="0.875" stop-color="#fff1c0"/><stop offset="1.000" stop-color="#ffe1b1"/></linearGradient>
<linearGradient id="cg2" x1="0" y1="0" x2="1" y2="0"><stop offset="0.000" stop-color="#83ffdb"/><stop offset="0.125" stop-color="#9bffd9"/><stop offset="0.250" stop-color="#b1ffd8"/><stop offset="0.375" stop-color="#c5ffd6"/><stop offset="0.500" stop-color="#d8ffd4"/><stop offset="0.625" stop-color="#ebffd2"/><stop offset="0.750" stop-color="#feffd0"/><stop offset="0.875" stop-color="#ffefc0"/><stop offset="1.000" stop-color="#ffdfb2"/></linearGradient>
<linearGradient id="cg3" x1="0" y1="0" x2="1" y2="0"><stop offset="0.000" stop-color="#85ffdd"/><stop offset="0.125" stop-color="#9dffdb"/><stop offset="0.250" stop-color="#b3ffda"/><stop offset="0.375" stop-color="#c7ffd8"/><stop offset="0.500" stop-color="#daffd6"/><stop offset="0.625" stop-color="#edffd5"/><stop offset="0.750" stop-color="#fffed2"/><stop offset="0.875" stop-color="#ffedc1"/><stop offset="1.000" stop-color="#ffddb2"/></linearGradient>
<linearGradient id="cg4" x1="0" y1="0" x2="1" y2="0"><stop offset="0.000" stop-color="#87ffdf"/><stop offset="0.125" stop-color="#9fffdd"/><stop offset="0.250" stop-color="#b5ffdc"/><stop offset="0.375" stop-color="#c9ffdb"/><stop offset="0.500" stop-color="#ddffd9"/><stop offset="0.625" stop-color="#f0ffd7"/><stop offset="0.750" stop-color="#fffcd2"/><stop offset="0.875" stop-color="#ffeac2"/><stop offset="1.000" stop-color="#ffdbb3"/></linearGradient>
<linearGradient id="cg5" x1="0" y1="0" x2="1" y2="0"><stop offset="0.000" stop-color="#89ffe1"/><stop offset="0.125" stop-color="#a1ffe0"/><stop offset="0.250" stop-color="#b7ffde"/><stop offset="0.375" stop-color="#cbffdd"/><stop offset="0.500" stop-color="#dfffdb"/><stop offset="0.625" stop-color="#f2ffda"/><stop offset="0.750" stop-color="#fff9d3"/><stop offset="0.875" stop-color="#ffe8c3"/><stop offset="1.000" stop-color="#ffd9b4"/></linearGradient>
<linearGradient id="cg6" x1="0" y1="0" x2="1" y2="0"><stop offset="0.000" stop-color="#8bffe3"/><stop offset="0.125" stop-color="#a3ffe2"/><stop offset="0.250" stop-color="#b9ffe0"/><stop offset="0.375" stop-color="#cdffdf"/><stop offset="0.500" stop-color="#e1ffde"/><stop offset="0.625" stop-color="#f4ffdc"/><stop offset="0.750" stop-color="#fff7d3"/><stop offset="0.875" stop-color="#ffe6c3"/><stop offset="1.000" stop-color="#ffd7b5"/></linearGradient>
<linearGradient id="cg7" x1="0" y1="0" x2="1" y2="0"><stop offset="0.000" stop-color="#8effe5"/><stop offset="0.125" stop-color="#a5ffe4"/><stop offset="0.250" stop-color="#bbffe3"/><stop offset="0.375" stop-color="#cfffe2"/><stop offset="0.500" stop-color="#e3ffe0"/><stop offset="0.625" stop-color="#f7ffdf"/><stop offset="0.750" stop-color="#fff4d4"/><stop offset="0.875" stop-color="#ffe4c4"/><stop offset="1.000" stop-color="#ffd5b5"/></linearGradient>
<linearGradient id="cg8" x1="0" y1="0" x2="1" y2="0"><stop offset="0.000" stop-color="#90ffe7"/><stop offset="0.125" stop-color="#a7ffe6"/><stop offset="0.250" stop-color="#bdffe5"/><stop offset="0.375" stop-color="#d2ffe4"/><stop offset="0.500" stop-color="#e6ffe3"/><stop offset="0.625" stop-color="#f9ffe1"/><stop offset="0.750" stop-color="#fff2d4"/><stop offset="0.875" stop-color="#ffe1c4"/><stop offset="1.000" stop-color="#ffd3b6"/></linearGradient>
<linearGradient id="cg9" x1="0" y1="0" x2="1" y2="0"><stop offset="0.000" stop-color="#92ffe9"/><stop offset="0.125" stop-color="#a9ffe8"/><stop offset="0.250" stop-color="#bfffe7"/><stop offset="0.375" stop-color="#d4ffe6"/><stop offset="0.500" stop-color="#e8ffe5"/><stop offset="0.625" stop-color="#fcffe4"/><stop offset="0.750" stop-color="#fff0d5"/><stop offset="0.875" stop-color="#ffdfc5"/><stop offset="1.000" stop-color="#ffd1b7"/></linearGradient>
<linearGradient id="cg10" x1="0" y1="0" x2="1" y2="0"><stop offset="0.000" stop-color="#94ffeb"/><stop offset="0.125" stop-color="#abffeb"/><stop offset="0.250" stop-color="#c1ffea"/><stop offset="0.375" stop-color="#d6ffe9"/><stop offset="0.500" stop-color="#eaffe8"/><stop offset="0.625" stop-color="#feffe7"/><stop offset="0.750" stop-color="#ffedd6"/><stop offset="0.875" stop-color="#ffddc6"/><stop offset="1.000" stop-color="#ffcfb8"/></linearGradient>
<linearGradient id="cg11" x1="0" y1="0" x2="1" y2="0"><stop offset="0.000" stop-color="#96ffee"/><stop offset="0.125" stop-color="#aeffed"/><stop offset="0.250" stop-color="#c3ffec"/><stop offset="0.375" stop-color="#d8ffeb"/><stop offset="0.500" stop-color="#edffea"/><stop offset="0.625" stop-color="#fffde8"/><stop offset="0.750" stop-color="#ffebd6"/><stop offset="0.875" stop-color="#ffdbc6"/><stop offset="1.000" stop-color="#ffcdb8"/></linearGradient>
<linearGradient id="cg12" x1="0" y1="0" x2="1" y2="0"><stop offset="0.000" stop-color="#98fff0"/><stop offset="0.125" stop-color="#b0ffef"/><stop offset="0.250" stop-color="#c6ffef"/><stop offset="0.375" stop-color="#dbffee"/><stop offset="0.500" stop-color="#efffed"/><stop offset="0.625" stop-color="#fffbe8"/><stop offset="0.750" stop-color="#ffe9d7"/><stop offset="0.875" stop-color="#ffd9c7"/><stop offset="1.000" stop-color="#ffcab9"/></linearGradient>
<linearGradient id="cg13" x1="0" y1="0" x2="1" y2="0"><stop offset="0.000" stop-color="#9afff2"/><stop offset="0.125" stop-color="#b2fff2"/><stop offset="0.250" stop-color="#c8fff1"/><stop offset="0.375" stop-color="#ddfff0"/><stop offset="0.500" stop-color="#f2fff0"/><stop offset="0.625" stop-color="#fff8e9"/><stop offset="0.750" stop-color="#ffe6d7"/><stop offset="0.875" stop-color="#ffd6c8"/><stop offset="1.000" stop-color="#ffc8ba"/></linearGradient>
<linearGradient id="cg14" x1="0" y1="0" x2="1" y2="0"><stop offset="0.000" stop-color="#9cfff4"/><stop offset="0.125" stop-color="#b4fff4"/><stop offset="0.250" stop-color="#cafff4"/><stop offset="0.375" stop-color="#dffff3"/><stop offset="0.500" stop-color="#f4fff2"/><stop offset="0.625" stop-color="#fff6e9"/><stop offset="0.750" stop-color="#ffe4d8"/><stop offset="0.875" stop-color="#ffd4c8"/><stop offset="1.000" stop-color="#ffc6ba"/></linearGradient>
<linearGradient id="cg15" x1="0" y1="0" x2="1" y2="0"><stop offset="0.000" stop-color="#9ffff7"/><stop offset="0.125" stop-color="#b6fff6"/><stop offset="0.250" stop-color="#ccfff6"/><stop offset="0.375" stop-color="#e2fff6"/><stop offset="0.500" stop-color="#f7fff5"/><stop offset="0.625" stop-color="#fff3e9"/><stop offset="0.750" stop-color="#ffe1d8"/><stop offset="0.875" stop-color="#ffd2c9"/><stop offset="1.000" stop-color="#ffc4bb"/></linearGradient>
<linearGradient id="cg16" x1="0" y1="0" x2="1" y2="0"><stop offset="0.000" stop-color="#a1fff9"/><stop offset="0.125" stop-color="#b9fff9"/><stop offset="0.250" stop-color="#cffff9"/><stop offset="0.375" stop-color="#e4fff8"/><stop offset="0.500" stop-color="#f9fff8"/><stop offset="0.625" stop-color="#fff1ea"/><stop offset="0.750" stop-color="#ffdfd8"/><stop offset="0.875" stop-color="#ffd0c9"/><stop offset="1.000" stop-color="#ffc2bc"/></linearGradient>
<linearGradient id="cg17" x1="0" y1="0" x2="1" y2="0"><stop offset="0.000" stop-color="#a3fffb"/><stop offset="0.125" stop-color="#bbfffb"/><stop offset="0.250" stop-color="#d1fffb"/><stop offset="0.375" stop-color="#e7fffb"/><stop offset="0.500" stop-color="#fcfffb"/><stop offset="0.625" stop-color="#ffeeea"/><stop offset="0.750" stop-color="#ffddd9"/><stop offset="0.875" stop-color="#ffceca"/><stop offset="1.000" stop-color="#ffc0bc"/></linearGradient>
<linearGradient id="cg18" x1="0" y1="0" x2="1" y2="0"><stop offset="0.000" stop-color="#a5fffe"/><stop offset="0.125" stop-color="#bdfffe"/><stop offset="0.250" stop-color="#d4fffe"/><stop offset="0.375" stop-color="#e9fffe"/><stop offset="0.500" stop-color="#fffffe"/><stop offset="0.625" stop-color="#ffeceb"/><stop offset="0.750" stop-color="#ffdad9"/><stop offset="0.875" stop-color="#ffcbca"/><stop offset="1.000" stop-color="#ffbebd"/></linearGradient>
<linearGradient id="cg19" x1="0" y1="0" x2="1" y2="0"><stop offset="0.000" stop-color="#a7feff"/><stop offset="0.125" stop-color="#befeff"/><stop offset="0.250" stop-color="#d5fdff"/><stop offset="0.375" stop-color="#eafdff"/><stop offset="0.500" stop-color="#fffdfe"/><stop offset="0.625" stop-color="#ffe9eb"/><stop offset="0.750" stop-color="#ffd8da"/><stop offset="0.875" stop-color="#ffc9cb"/><stop offset="1.000" stop-color="#ffbcbd"/></linearGradient>
<linearGradient id="cg20" x1="0" y1="0" x2="1" y2="0"><stop offset="0.000" stop-color="#a7fbff"/><stop offset="0.125" stop-color="#bffbff"/><stop offset="0.250" stop-color="#d5fbff"/><stop offset="0.375" stop-color="#eafaff"/><stop offset="0.500" stop-color="#fffaff"/><stop offset="0.625" stop-color="#ffe7eb"/><stop offset="0.750" stop-color="#ffd6da"/><stop offset="0.875" stop-color="#ffc7cb"/><stop offset="1.000" stop-color="#ffb9be"/></linearGradient>
<linearGradient id="cg21" x1="0" y1="0" x2="1" y2="0"><stop offset="0.000" stop-color="#a8f9ff"/><stop offset="0.125" stop-color="#bff8ff"/><stop offset="0.250" stop-color="#d5f8ff"/><stop offset="0.375" stop-color="#eaf8ff"/><stop offset="0.500" stop-color="#fff7ff"/><stop offset="0.625" stop-color="#ffe4ec"/><stop offset="0.750" stop-color="#ffd3db"/><stop offset="0.875" stop-color="#ffc5cc"/><stop offset="1.000" stop-color="#ffb7bf"/></linearGradient>
<linearGradient id="cg22" x1="0" y1="0" x2="1" y2="0"><stop offset="0.000" stop-color="#a9f6ff"/><stop offset="0.125" stop-color="#bff6ff"/><stop offset="0.250" stop-color="#d5f5ff"/><stop offset="0.375" stop-color="#eaf5ff"/><stop offset="0.500" stop-color="#fff4ff"/><stop offset="0.625" stop-color="#ffe2ec"/><stop offset="0.750" stop-color="#ffd1db"/><stop offset="0.875" stop-color="#ffc2cc"/><stop offset="1.000" stop-color="#ffb5bf"/></linearGradient>
<linearGradient id="cg23" x1="0" y1="0" x2="1" y2="0"><stop offset="0.000" stop-color="#a9f4ff"/><stop offset="0.125" stop-color="#c0f3ff"/><stop offset="0.250" stop-color="#d5f3ff"/><stop offset="0.375" stop-color="#eaf2ff"/><stop offset="0.500" stop-color="#fff1ff"/><stop offset="0.625" stop-color="#ffdfec"/><stop offset="0.750" stop-color="#ffcfdc"/><stop offset="0.875" stop-color="#ffc0cd"/><stop offset="1.000" stop-color="#ffb3c0"/></linearGradient>
<linearGradient id="cg24" x1="0" y1="0" x2="1" y2="0"><stop offset="0.000" stop-color="#aaf1ff"/><stop offset="0.125" stop-color="#c0f1ff"/><stop offset="0.250" stop-color="#d6f0ff"/><stop offset="0.375" stop-color="#eaefff"/><stop offset="0.500" stop-color="#ffefff"/><stop offset="0.625" stop-color="#ffdced"/><stop offset="0.750" stop-color="#ffccdc"/><stop offset="0.875" stop-color="#ffbecd"/><stop offset="1.000" stop-color="#ffb1c0"/></linearGradient>
<linearGradient id="cg25" x1="0" y1="0" x2="1" y2="0"><stop offset="0.000" stop-color="#aaefff"/><stop offset="0.125" stop-color="#c1eeff"/><stop offset="0.250" stop-color="#d6eeff"/><stop offset="0.375" stop-color="#eaedff"/><stop offset="0.500" stop-color="#feecff"/><stop offset="0.625" stop-color="#ffdaed"/><stop offset="0.750" stop-color="#ffcadd"/><stop offset="0.875" stop-color="#ffbbce"/><stop offset="1.000" stop-color="#ffaec1"/></linearGradient>
<linearGradient id="cg26" x1="0" y1="0" x2="1" y2="0"><stop offset="0.000" stop-color="#abedff"/><stop offset="0.125" stop-color="#c1ecff"/><stop offset="0.250" stop-color="#d6ebff"/><stop offset="0.375" stop-color="#eaeaff"/><stop offset="0.500" stop-color="#fee9ff"/><stop offset="0.625" stop-color="#ffd7ed"/><stop offset="0.750" stop-color="#ffc8dd"/><stop offset="0.875" stop-color="#ffb9ce"/><stop offset="1.000" stop-color="#ffacc1"/></linearGradient>
<linearGradient id="cg27" x1="0" y1="0" x2="1" y2="0"><stop offset="0.000" stop-color="#abeaff"/><stop offset="0.125" stop-color="#c1e9ff"/><stop offset="0.250" stop-color="#d6e8ff"/><stop offset="0.375" stop-color="#eae7ff"/><stop offset="0.500" stop-color="#fee6ff"/><stop offset="0.625" stop-color="#ffd5ee"/><stop offset="0.750" stop-color="#ffc5dd"/><stop offset="0.875" stop-color="#ffb7cf"/><stop offset="1.000" stop-color="#ffaac2"/></linearGradient>
<linearGradient id="cg28" x1="0" y1="0" x2="1" y2="0"><stop offset="0.000" stop-color="#ace8ff"/><stop offset="0.125" stop-color="#c2e7ff"/><stop offset="0.250" stop-color="#d6e6ff"/><stop offset="0.375" stop-color="#eae4ff"/><stop offset="0.500" stop-color="#fee3ff"/><stop offset="0.625" stop-color="#ffd2ee"/><stop offset="0.750" stop-color="#ffc3de"/><stop offset="0.875" stop-color="#ffb5cf"/><stop offset="1.000" stop-color="#ffa8c2"/></linearGradient>
<linearGradient id="cg29" x1="0" y1="0" x2="1" y2="0"><stop offset="0.000" stop-color="#ade5ff"/><stop offset="0.125" stop-color="#c2e4ff"/><stop offset="0.250" stop-color="#d6e3ff"/><stop offset="0.375" stop-color="#eae2ff"/><stop offset="0.500" stop-color="#fee0ff"/><stop offset="0.625" stop-color="#ffd0ee"/><stop offset="0.750" stop-color="#ffc0de"/><stop offset="0.875" stop-color="#ffb2d0"/><stop offset="1.000" stop-color="#ffa6c3"/></linearGradient>
<linearGradient id="cg30" x1="0" y1="0" x2="1" y2="0"><stop offset="0.000" stop-color="#ade3ff"/><stop offset="0.125" stop-color="#c2e2ff"/><stop offset="0.250" stop-color="#d6e1ff"/><stop offset="0.375" stop-color="#eadfff"/><stop offset="0.500" stop-color="#fdddff"/><stop offset="0.625" stop-color="#ffcdee"/><stop offset="0.750" stop-color="#ffbedf"/><stop offset="0.875" stop-color="#ffb0d0"/><stop offset="1.000" stop-color="#ffa3c4"/></linearGradient>
<linearGradient id="cg31" x1="0" y1="0" x2="1" y2="0"><stop offset="0.000" stop-color="#aee1ff"/><stop offset="0.125" stop-color="#c3dfff"/><stop offset="0.250" stop-color="#d7deff"/><stop offset="0.375" stop-color="#eadcff"/><stop offset="0.500" stop-color="#fddbff"/><stop offset="0.625" stop-color="#ffcbef"/><stop offset="0.750" stop-color="#ffbbdf"/><stop offset="0.875" stop-color="#ffaed1"/><stop offset="1.000" stop-color="#ffa1c4"/></linearGradient>
<linearGradient id="cg32" x1="0" y1="0" x2="1" y2="0"><stop offset="0.000" stop-color="#aedeff"/><stop offset="0.125" stop-color="#c3ddff"/><stop offset="0.250" stop-color="#d7dbff"/><stop offset="0.375" stop-color="#eadaff"/><stop offset="0.500" stop-color="#fdd8ff"/><stop offset="0.625" stop-color="#ffc8ef"/><stop offset="0.750" stop-color="#ffb9df"/><stop offset="0.875" stop-color="#ffabd1"/><stop offset="1.000" stop-color="#ff9fc5"/></linearGradient>
<linearGradient id="cg33" x1="0" y1="0" x2="1" y2="0"><stop offset="0.000" stop-color="#afdcff"/><stop offset="0.125" stop-color="#c3daff"/><stop offset="0.250" stop-color="#d7d9ff"/><stop offset="0.375" stop-color="#ead7ff"/><stop offset="0.500" stop-color="#fdd5ff"/><stop offset="0.625" stop-color="#ffc6ef"/><stop offset="0.750" stop-color="#ffb7e0"/><stop offset="0.875" stop-color="#ffa9d2"/><stop offset="1.000" stop-color="#ff9cc5"/></linearGradient>
<linearGradient id="cg34" x1="0" y1="0" x2="1" y2="0"><stop offset="0.000" stop-color="#afdaff"/><stop offset="0.125" stop-color="#c4d8ff"/><stop offset="0.250" stop-color="#d7d6ff"/><stop offset="0.375" stop-color="#ead4ff"/><stop offset="0.500" stop-color="#fdd2ff"/><stop offset="0.625" stop-color="#ffc3f0"/><stop offset="0.750" stop-color="#ffb4e0"/><stop offset="0.875" stop-color="#ffa7d2"/><stop offset="1.000" stop-color="#ff9ac6"/></linearGradient>
<linearGradient id="cg35" x1="0" y1="0" x2="1" y2="0"><stop offset="0.000" stop-color="#b0d7ff"/><stop offset="0.125" stop-color="#c4d6ff"/><stop offset="0.250" stop-color="#d7d4ff"/><stop offset="0.375" stop-color="#ead2ff"/><stop offset="0.500" stop-color="#fdcfff"/><stop offset="0.625" stop-color="#ffc1f0"/><stop offset="0.750" stop-color="#ffb2e0"/><stop offset="0.875" stop-color="#ffa4d3"/><stop offset="1.000" stop-color="#ff98c6"/></linearGradient>
<linearGradient id="cg36" x1="0" y1="0" x2="1" y2="0"><stop offset="0.000" stop-color="#b0d5ff"/><stop offset="0.125" stop-color="#c4d3ff"/><stop offset="0.250" stop-color="#d7d1ff"/><stop offset="0.375" stop-color="#eacfff"/><stop offset="0.500" stop-color="#fccdff"/><stop offset="0.625" stop-color="#ffbef0"/><stop offset="0.750" stop-color="#ffafe1"/><stop offset="0.875" stop-color="#ffa2d3"/><stop offset="1.000" stop-color="#ff95c7"/></linearGradient>
<linearGradient id="cg37" x1="0" y1="0" x2="1" y2="0"><stop offset="0.000" stop-color="#b1d3ff"/><stop offset="0.125" stop-color="#c4d1ff"/><stop offset="0.250" stop-color="#d7cfff"/><stop offset="0.375" stop-color="#eaccff"/><stop offset="0.500" stop-color="#fccaff"/><stop offset="0.625" stop-color="#ffbbf0"/><stop offset="0.750" stop-color="#ffade1"/><stop offset="0.875" stop-color="#ff9fd3"/><stop offset="1.000" stop-color="#ff93c7"/></linearGradient>
</defs>
<clipPath id="cpf"><rect x="356.5" y="625.5" width="228.0" height="151.0"/></clipPath><g clip-path="url(#cpf)">
<rect x="356.0" y="625" width="229.0" height="4" fill="url(#cg0)"/>
<rect x="356.0" y="629" width="229.0" height="4" fill="url(#cg1)"/>
<rect x="356.0" y="633" width="229.0" height="4" fill="url(#cg2)"/>
<rect x="356.0" y="637" width="229.0" height="4" fill="url(#cg3)"/>
<rect x="356.0" y="641" width="229.0" height="4" fill="url(#cg4)"/>
<rect x="356.0" y="645" width="229.0" height="4" fill="url(#cg5)"/>
<rect x="356.0" y="649" width="229.0" height="4" fill="url(#cg6)"/>
<rect x="356.0" y="653" width="229.0" height="4" fill="url(#cg7)"/>
<rect x="356.0" y="657" width="229.0" height="4" fill="url(#cg8)"/>
<rect x="356.0" y="661" width="229.0" height="4" fill="url(#cg9)"/>
<rect x="356.0" y="665" width="229.0" height="4" fill="url(#cg10)"/>
<rect x="356.0" y="669" width="229.0" height="4" fill="url(#cg11)"/>
<rect x="356.0" y="673" width="229.0" height="4" fill="url(#cg12)"/>
<rect x="356.0" y="677" width="229.0" height="4" fill="url(#cg13)"/>
<rect x="356.0" y="681" width="229.0" height="4" fill="url(#cg14)"/>
<rect x="356.0" y="685" width="229.0" height="4" fill="url(#cg15)"/>
<rect x="356.0" y="689" width="229.0" height="4" fill="url(#cg16)"/>
<rect x="356.0" y="693" width="229.0" height="4" fill="url(#cg17)"/>
<rect x="356.0" y="697" width="229.0" height="4" fill="url(#cg18)"/>
<rect x="356.0" y="701" width="229.0" height="4" fill="url(#cg19)"/>
<rect x="356.0" y="705" width="229.0" height="4" fill="url(#cg20)"/>
<rect x="356.0" y="709" width="229.0" height="4" fill="url(#cg21)"/>
<rect x="356.0" y="713" width="229.0" height="4" fill="url(#cg22)"/>
<rect x="356.0" y="717" width="229.0" height="4" fill="url(#cg23)"/>
<rect x="356.0" y="721" width="229.0" height="4" fill="url(#cg24)"/>
<rect x="356.0" y="725" width="229.0" height="4" fill="url(#cg25)"/>
<rect x="356.0" y="729" width="229.0" height="4" fill="url(#cg26)"/>
<rect x="356.0" y="733" width="229.0" height="4" fill="url(#cg27)"/>
<rect x="356.0" y="737" width="229.0" height="4" fill="url(#cg28)"/>
<rect x="356.0" y="741" width="229.0" height="4" fill="url(#cg29)"/>
<rect x="356.0" y="745" width="229.0" height="4" fill="url(#cg30)"/>
<rect x="356.0" y="749" width="229.0" height="4" fill="url(#cg31)"/>
<rect x="356.0" y="753" width="229.0" height="4" fill="url(#cg32)"/>
<rect x="356.0" y="757" width="229.0" height="4" fill="url(#cg33)"/>
<rect x="356.0" y="761" width="229.0" height="4" fill="url(#cg34)"/>
<rect x="356.0" y="765" width="229.0" height="4" fill="url(#cg35)"/>
<rect x="356.0" y="769" width="229.0" height="4" fill="url(#cg36)"/>
<rect x="356.0" y="773" width="229.0" height="4" fill="url(#cg37)"/>
</g>
<rect x="356.5" y="625.5" width="228.0" height="151.0" fill="none" stroke="#9a9a9a" stroke-width="1"/>
<clipPath id="cpc"><rect x="356.5" y="625.5" width="228.0" height="151.0"/></clipPath>
<path d="M385.7 777 Q 482 708.5 584.7 649.6" fill="none" stroke="#0a0a0a" stroke-width="2.4" clip-path="url(#cpc)"/>
<path d="M365.5 776.5V781.5" stroke="#d8d8d8" stroke-width="1.3"/>
<path d="M411.5 776.5V781.5" stroke="#d8d8d8" stroke-width="1.3"/>
<path d="M457.5 776.5V781.5" stroke="#d8d8d8" stroke-width="1.3"/>
<path d="M502.5 776.5V781.5" stroke="#d8d8d8" stroke-width="1.3"/>
<path d="M548.5 776.5V781.5" stroke="#d8d8d8" stroke-width="1.3"/>
<path d="M351.5 757.5H356.5" stroke="#d8d8d8" stroke-width="1.3"/>
<path d="M351.5 727.5H356.5" stroke="#d8d8d8" stroke-width="1.3"/>
<path d="M351.5 697.5H356.5" stroke="#d8d8d8" stroke-width="1.3"/>
<path d="M351.5 667.5H356.5" stroke="#d8d8d8" stroke-width="1.3"/>
<path d="M351.5 637.5H356.5" stroke="#d8d8d8" stroke-width="1.3"/>
<circle cx="429.6" cy="718.9" r="4" fill="#111"/>
<circle cx="455.3" cy="700.2" r="4.3" fill="#555" stroke="#111" stroke-width="1.4"/>
<circle cx="455.8" cy="699.2" r="4.3" fill="#999" stroke="#111" stroke-width="1.4"/>
<circle cx="457.8" cy="696.2" r="4.3" fill="#f4f4f4" stroke="#111" stroke-width="1.2"/>
<circle cx="454.8" cy="696.6" r="4.0" fill="#ffffff" stroke="#111" stroke-width="1.2"/>
<rect x="464.4" y="695.4" width="12.6" height="10.4" fill="#fff" stroke="#0a0a0a" stroke-width="1.6"/>
</svg>
<div class="t" style="left:322.81px;top:753px;font-size:12.65px;color:#d6d6d6;transform:scaleX(1.1603);-webkit-text-stroke:0.2px #d6d6d6;">0.31</div>
<div class="t" style="left:322.81px;top:722px;font-size:12.65px;color:#d6d6d6;transform:scaleX(1.1634);-webkit-text-stroke:0.2px #d6d6d6;">0.32</div>
<div class="t" style="left:322.81px;top:692px;font-size:12.65px;color:#d6d6d6;transform:scaleX(1.1572);-webkit-text-stroke:0.2px #d6d6d6;">0.33</div>
<div class="t" style="left:322.82px;top:662px;font-size:12.65px;color:#d6d6d6;transform:scaleX(1.1510);-webkit-text-stroke:0.2px #d6d6d6;">0.34</div>
<div class="t" style="left:322.81px;top:632px;font-size:12.65px;color:#d6d6d6;transform:scaleX(1.1572);-webkit-text-stroke:0.2px #d6d6d6;">0.35</div>
<div class="t" style="left:351.69px;top:786px;font-size:12.65px;color:#d6d6d6;transform:scaleX(1.1580);-webkit-text-stroke:0.2px #d6d6d6;">0.29</div>
<div class="t" style="left:401.37px;top:786px;font-size:12.65px;color:#d6d6d6;transform:scaleX(1.1580);-webkit-text-stroke:0.2px #d6d6d6;">0.3</div>
<div class="t" style="left:442.99px;top:786px;font-size:12.65px;color:#d6d6d6;transform:scaleX(1.1580);-webkit-text-stroke:0.2px #d6d6d6;">0.31</div>
<div class="t" style="left:488.68px;top:786px;font-size:12.65px;color:#d6d6d6;transform:scaleX(1.1580);-webkit-text-stroke:0.2px #d6d6d6;">0.32</div>
<div class="t" style="left:534.25px;top:786px;font-size:12.65px;color:#d6d6d6;transform:scaleX(1.1580);-webkit-text-stroke:0.2px #d6d6d6;">0.33</div>
<div style="position:absolute;left:602px;top:605px;width:989px;height:25px;background:linear-gradient(#2d2d2d 0,#2b2b2b 52%,#151515 52%,#121212 100%);"></div>
<div style="position:absolute;left:602px;top:605px;width:13px;height:25px;background:#000;"></div>
<div style="position:absolute;left:602px;top:605px;width:989px;height:200px;overflow:hidden;">
<div class="t" style="left:142.43px;top:8px;font-size:12.94px;color:#ffffff;transform:scaleX(1.1100);-webkit-text-stroke:0.35px #ffffff;">0</div>
<div class="t" style="left:230.32px;top:8px;font-size:12.94px;color:#ffffff;transform:scaleX(1.1100);-webkit-text-stroke:0.35px #ffffff;">10</div>
<div class="t" style="left:310.68px;top:8px;font-size:12.94px;color:#ffffff;transform:scaleX(1.1100);-webkit-text-stroke:0.35px #ffffff;">20</div>
<div class="t" style="left:390.83px;top:8px;font-size:12.94px;color:#ffffff;transform:scaleX(1.1100);-webkit-text-stroke:0.35px #ffffff;">30</div>
<div class="t" style="left:471.11px;top:8px;font-size:12.94px;color:#ffffff;transform:scaleX(1.1100);-webkit-text-stroke:0.35px #ffffff;">40</div>
<div class="t" style="left:550.83px;top:8px;font-size:12.94px;color:#ffffff;transform:scaleX(1.1100);-webkit-text-stroke:0.35px #ffffff;">50</div>
<div class="t" style="left:630.68px;top:8px;font-size:12.94px;color:#ffffff;transform:scaleX(1.1100);-webkit-text-stroke:0.35px #ffffff;">60</div>
<div class="t" style="left:710.68px;top:8px;font-size:12.94px;color:#ffffff;transform:scaleX(1.1100);-webkit-text-stroke:0.35px #ffffff;">70</div>
<div class="t" style="left:790.75px;top:8px;font-size:12.94px;color:#ffffff;transform:scaleX(1.1100);-webkit-text-stroke:0.35px #ffffff;">80</div>
<div class="t" style="left:870.75px;top:8px;font-size:12.94px;color:#ffffff;transform:scaleX(1.1100);-webkit-text-stroke:0.35px #ffffff;">90</div>
<div class="t" style="left:950.32px;top:8px;font-size:12.94px;color:#ffffff;transform:scaleX(1.1100);-webkit-text-stroke:0.35px #ffffff;">100</div>
<div style="position:absolute;left:13px;top:25px;width:976px;height:23px;background:#424242;"></div>
<div style="position:absolute;left:0;top:25px;width:13px;height:23px;background:linear-gradient(#2c2c2c,#1b1b1b);"></div>
<div class="t" style="left:16.96px;top:31px;font-size:13.81px;color:#ffffff;transform:scaleX(1.0076);-webkit-text-stroke:0.2px #ffffff;">x: CIE31</div>
<div class="t" style="left:142.60px;top:31px;font-size:13.81px;color:#ffffff;transform:scaleX(1.0800);-webkit-text-stroke:0.2px #ffffff;">0.2586</div>
<div class="t" style="left:231.00px;top:31px;font-size:13.81px;color:#ffffff;transform:scaleX(1.0800);-webkit-text-stroke:0.2px #ffffff;">0.3038</div>
<div class="t" style="left:311.00px;top:31px;font-size:13.81px;color:#ffffff;transform:scaleX(1.0800);-webkit-text-stroke:0.2px #ffffff;">0.3095</div>
<div class="t" style="left:391.00px;top:31px;font-size:13.81px;color:#ffffff;transform:scaleX(1.0800);-webkit-text-stroke:0.2px #ffffff;">0.3095</div>
<div class="t" style="left:471.00px;top:31px;font-size:13.81px;color:#ffffff;transform:scaleX(1.0800);-webkit-text-stroke:0.2px #ffffff;">0.3090</div>
<div class="t" style="left:551.00px;top:31px;font-size:13.81px;color:#ffffff;transform:scaleX(1.0800);-webkit-text-stroke:0.2px #ffffff;">0.3106</div>
<div class="t" style="left:631.00px;top:31px;font-size:13.81px;color:#ffffff;transform:scaleX(1.0800);-webkit-text-stroke:0.2px #ffffff;">0.3097</div>
<div class="t" style="left:711.00px;top:31px;font-size:13.81px;color:#ffffff;transform:scaleX(1.0800);-webkit-text-stroke:0.2px #ffffff;">0.3098</div>
<div class="t" style="left:791.00px;top:31px;font-size:13.81px;color:#ffffff;transform:scaleX(1.0800);-webkit-text-stroke:0.2px #ffffff;">0.3100</div>
<div class="t" style="left:871.00px;top:31px;font-size:13.81px;color:#ffffff;transform:scaleX(1.0800);-webkit-text-stroke:0.2px #ffffff;">0.3101</div>
<div class="t" style="left:951.00px;top:31px;font-size:13.81px;color:#ffffff;transform:scaleX(1.0800);-webkit-text-stroke:0.2px #ffffff;">0.3093</div>
<div style="position:absolute;left:13px;top:48px;width:976px;height:23px;background:#808080;"></div>
<div style="position:absolute;left:0;top:48px;width:13px;height:23px;background:linear-gradient(#2c2c2c,#1b1b1b);"></div>
<div class="t" style="left:17.03px;top:54px;font-size:13.81px;color:#ffffff;transform:scaleX(1.0159);-webkit-text-stroke:0.2px #ffffff;">y: CIE31</div>
<div class="t" style="left:142.60px;top:54px;font-size:13.81px;color:#ffffff;transform:scaleX(1.0800);-webkit-text-stroke:0.2px #ffffff;">0.2638</div>
<div class="t" style="left:231.00px;top:54px;font-size:13.81px;color:#ffffff;transform:scaleX(1.0800);-webkit-text-stroke:0.2px #ffffff;">0.3230</div>
<div class="t" style="left:311.00px;top:54px;font-size:13.81px;color:#ffffff;transform:scaleX(1.0800);-webkit-text-stroke:0.2px #ffffff;">0.3285</div>
<div class="t" style="left:391.00px;top:54px;font-size:13.81px;color:#ffffff;transform:scaleX(1.0800);-webkit-text-stroke:0.2px #ffffff;">0.3296</div>
<div class="t" style="left:471.00px;top:54px;font-size:13.81px;color:#ffffff;transform:scaleX(1.0800);-webkit-text-stroke:0.2px #ffffff;">0.3291</div>
<div class="t" style="left:551.00px;top:54px;font-size:13.81px;color:#ffffff;transform:scaleX(1.0800);-webkit-text-stroke:0.2px #ffffff;">0.3306</div>
<div class="t" style="left:631.00px;top:54px;font-size:13.81px;color:#ffffff;transform:scaleX(1.0800);-webkit-text-stroke:0.2px #ffffff;">0.3300</div>
<div class="t" style="left:711.00px;top:54px;font-size:13.81px;color:#ffffff;transform:scaleX(1.0800);-webkit-text-stroke:0.2px #ffffff;">0.3303</div>
<div class="t" style="left:791.00px;top:54px;font-size:13.81px;color:#ffffff;transform:scaleX(1.0800);-webkit-text-stroke:0.2px #ffffff;">0.3310</div>
<div class="t" style="left:871.00px;top:54px;font-size:13.81px;color:#ffffff;transform:scaleX(1.0800);-webkit-text-stroke:0.2px #ffffff;">0.3307</div>
<div class="t" style="left:951.00px;top:54px;font-size:13.81px;color:#ffffff;transform:scaleX(1.0800);-webkit-text-stroke:0.2px #ffffff;">0.3303</div>
<div style="position:absolute;left:13px;top:71px;width:976px;height:22px;background:#424242;"></div>
<div style="position:absolute;left:0;top:71px;width:13px;height:22px;background:linear-gradient(#2c2c2c,#1b1b1b);"></div>
<div class="t" style="left:17.61px;top:76px;font-size:13.81px;color:#ffffff;transform:scaleX(0.8409);-webkit-text-stroke:0.2px #ffffff;">Y</div>
<div class="t" style="left:142.60px;top:76px;font-size:13.81px;color:#ffffff;transform:scaleX(1.0800);-webkit-text-stroke:0.2px #ffffff;">0.2933</div>
<div class="t" style="left:230.85px;top:76px;font-size:13.81px;color:#ffffff;transform:scaleX(1.0800);-webkit-text-stroke:0.2px #ffffff;">2.0702</div>
<div class="t" style="left:310.93px;top:76px;font-size:13.81px;color:#ffffff;transform:scaleX(1.0800);-webkit-text-stroke:0.2px #ffffff;">8.8863</div>
<div class="t" style="left:390.85px;top:76px;font-size:13.81px;color:#ffffff;transform:scaleX(1.0800);-webkit-text-stroke:0.2px #ffffff;">21.3254</div>
<div class="t" style="left:471.30px;top:76px;font-size:13.81px;color:#ffffff;transform:scaleX(1.0800);-webkit-text-stroke:0.2px #ffffff;">40.6892</div>
<div class="t" style="left:550.85px;top:76px;font-size:13.81px;color:#ffffff;transform:scaleX(1.0800);-webkit-text-stroke:0.2px #ffffff;">67.4070</div>
<div class="t" style="left:630.48px;top:76px;font-size:13.81px;color:#ffffff;transform:scaleX(1.0800);-webkit-text-stroke:0.2px #ffffff;">100.1261</div>
<div class="t" style="left:710.48px;top:76px;font-size:13.81px;color:#ffffff;transform:scaleX(1.0800);-webkit-text-stroke:0.2px #ffffff;">139.3542</div>
<div class="t" style="left:790.48px;top:76px;font-size:13.81px;color:#ffffff;transform:scaleX(1.0800);-webkit-text-stroke:0.2px #ffffff;">189.3647</div>
<div class="t" style="left:870.85px;top:76px;font-size:13.81px;color:#ffffff;transform:scaleX(1.0800);-webkit-text-stroke:0.2px #ffffff;">245.9475</div>
<div class="t" style="left:951.00px;top:76px;font-size:13.81px;color:#ffffff;transform:scaleX(1.0800);-webkit-text-stroke:0.2px #ffffff;">310.5087</div>
<div style="position:absolute;left:13px;top:93px;width:976px;height:23px;background:#808080;"></div>
<div style="position:absolute;left:0;top:93px;width:13px;height:23px;background:linear-gradient(#2c2c2c,#1b1b1b);"></div>
<div class="t" style="left:17.91px;top:99px;font-size:13.81px;color:#ffffff;transform:scaleX(1.0649);-webkit-text-stroke:0.2px #ffffff;">Target Y</div>
<div class="t" style="left:142.60px;top:99px;font-size:13.81px;color:#ffffff;transform:scaleX(1.0800);-webkit-text-stroke:0.2px #ffffff;">0.0000</div>
<div class="t" style="left:231.00px;top:99px;font-size:13.81px;color:#ffffff;transform:scaleX(1.0800);-webkit-text-stroke:0.2px #ffffff;">3.2075</div>
<div class="t" style="left:310.48px;top:99px;font-size:13.81px;color:#ffffff;transform:scaleX(1.0800);-webkit-text-stroke:0.2px #ffffff;">10.2793</div>
<div class="t" style="left:390.85px;top:99px;font-size:13.81px;color:#ffffff;transform:scaleX(1.0800);-webkit-text-stroke:0.2px #ffffff;">22.4411</div>
<div style="position:absolute;left:467px;top:93.5px;width:78px;height:21.5px;background:#f2f2f2;"></div>
<div class="t" style="left:471.60px;top:99px;font-size:13.81px;color:#000000;transform:scaleX(1.0800);-webkit-text-stroke:0.2px #000000;">41.2568</div>
<div class="t" style="left:550.85px;top:99px;font-size:13.81px;color:#ffffff;transform:scaleX(1.0800);-webkit-text-stroke:0.2px #ffffff;">67.0267</div>
<div class="t" style="left:630.93px;top:99px;font-size:13.81px;color:#ffffff;transform:scaleX(1.0800);-webkit-text-stroke:0.2px #ffffff;">98.9117</div>
<div class="t" style="left:710.48px;top:99px;font-size:13.81px;color:#ffffff;transform:scaleX(1.0800);-webkit-text-stroke:0.2px #ffffff;">138.2391</div>
<div class="t" style="left:790.48px;top:99px;font-size:13.81px;color:#ffffff;transform:scaleX(1.0800);-webkit-text-stroke:0.2px #ffffff;">187.4939</div>
<div class="t" style="left:870.85px;top:99px;font-size:13.81px;color:#ffffff;transform:scaleX(1.0800);-webkit-text-stroke:0.2px #ffffff;">245.7053</div>
<div class="t" style="left:951.00px;top:99px;font-size:13.81px;color:#ffffff;transform:scaleX(1.0800);-webkit-text-stroke:0.2px #ffffff;">310.5087</div>
<div style="position:absolute;left:13px;top:116px;width:976px;height:23px;background:#424242;"></div>
<div style="position:absolute;left:0;top:116px;width:13px;height:23px;background:linear-gradient(#2c2c2c,#1b1b1b);"></div>
<div class="t" style="left:17.22px;top:122px;font-size:13.81px;color:#ffffff;transform:scaleX(1.1284);-webkit-text-stroke:0.2px #ffffff;">Gamma Log/Log</div>
<div class="t" style="left:142.08px;top:122px;font-size:13.81px;color:#ffffff;transform:scaleX(1.0800);-webkit-text-stroke:0.2px #ffffff;">1.2778</div>
<div class="t" style="left:230.85px;top:122px;font-size:13.81px;color:#ffffff;transform:scaleX(1.0800);-webkit-text-stroke:0.2px #ffffff;">2.1946</div>
<div class="t" style="left:310.85px;top:122px;font-size:13.81px;color:#ffffff;transform:scaleX(1.0800);-webkit-text-stroke:0.2px #ffffff;">2.2080</div>
<div class="t" style="left:390.85px;top:122px;font-size:13.81px;color:#ffffff;transform:scaleX(1.0800);-webkit-text-stroke:0.2px #ffffff;">2.2125</div>
<div class="t" style="left:470.85px;top:122px;font-size:13.81px;color:#ffffff;transform:scaleX(1.0800);-webkit-text-stroke:0.2px #ffffff;">2.2179</div>
<div class="t" style="left:550.85px;top:122px;font-size:13.81px;color:#ffffff;transform:scaleX(1.0800);-webkit-text-stroke:0.2px #ffffff;">2.2162</div>
<div class="t" style="left:630.85px;top:122px;font-size:13.81px;color:#ffffff;transform:scaleX(1.0800);-webkit-text-stroke:0.2px #ffffff;">2.2156</div>
<div class="t" style="left:710.85px;top:122px;font-size:13.81px;color:#ffffff;transform:scaleX(1.0800);-webkit-text-stroke:0.2px #ffffff;">2.2288</div>
<div class="t" style="left:790.85px;top:122px;font-size:13.81px;color:#ffffff;transform:scaleX(1.0800);-webkit-text-stroke:0.2px #ffffff;">2.2162</div>
<div class="t" style="left:870.85px;top:122px;font-size:13.81px;color:#ffffff;transform:scaleX(1.0800);-webkit-text-stroke:0.2px #ffffff;">2.2590</div>
<div class="t" style="left:950.85px;top:122px;font-size:13.81px;color:#ffffff;transform:scaleX(1.0800);-webkit-text-stroke:0.2px #ffffff;">2.2749</div>
<div style="position:absolute;left:13px;top:139px;width:976px;height:23px;background:#808080;"></div>
<div style="position:absolute;left:0;top:139px;width:13px;height:23px;background:linear-gradient(#2c2c2c,#1b1b1b);"></div>
<div class="t" style="left:17.37px;top:145px;font-size:13.81px;color:#ffffff;transform:scaleX(0.9120);-webkit-text-stroke:0.2px #ffffff;">CCT</div>
<div class="t" style="left:142.08px;top:145px;font-size:13.81px;color:#ffffff;transform:scaleX(1.0800);-webkit-text-stroke:0.2px #ffffff;">15483.0000</div>
<div class="t" style="left:230.85px;top:145px;font-size:13.81px;color:#ffffff;transform:scaleX(1.0800);-webkit-text-stroke:0.2px #ffffff;">7078.0000</div>
<div class="t" style="left:310.85px;top:145px;font-size:13.81px;color:#ffffff;transform:scaleX(1.0800);-webkit-text-stroke:0.2px #ffffff;">6684.0000</div>
<div class="t" style="left:390.85px;top:145px;font-size:13.81px;color:#ffffff;transform:scaleX(1.0800);-webkit-text-stroke:0.2px #ffffff;">6675.0000</div>
<div class="t" style="left:470.85px;top:145px;font-size:13.81px;color:#ffffff;transform:scaleX(1.0800);-webkit-text-stroke:0.2px #ffffff;">6709.0000</div>
<div class="t" style="left:550.85px;top:145px;font-size:13.81px;color:#ffffff;transform:scaleX(1.0800);-webkit-text-stroke:0.2px #ffffff;">6610.0000</div>
<div class="t" style="left:630.85px;top:145px;font-size:13.81px;color:#ffffff;transform:scaleX(1.0800);-webkit-text-stroke:0.2px #ffffff;">6662.0000</div>
<div class="t" style="left:710.85px;top:145px;font-size:13.81px;color:#ffffff;transform:scaleX(1.0800);-webkit-text-stroke:0.2px #ffffff;">6654.0000</div>
<div class="t" style="left:790.85px;top:145px;font-size:13.81px;color:#ffffff;transform:scaleX(1.0800);-webkit-text-stroke:0.2px #ffffff;">6635.0000</div>
<div class="t" style="left:870.85px;top:145px;font-size:13.81px;color:#ffffff;transform:scaleX(1.0800);-webkit-text-stroke:0.2px #ffffff;">6632.0000</div>
<div class="t" style="left:950.85px;top:145px;font-size:13.81px;color:#ffffff;transform:scaleX(1.0800);-webkit-text-stroke:0.2px #ffffff;">6683.0000</div>
<div style="position:absolute;left:13px;top:162px;width:976px;height:22px;background:#424242;"></div>
<div style="position:absolute;left:0;top:162px;width:13px;height:22px;background:linear-gradient(#2c2c2c,#1b1b1b);"></div>
<div class="t" style="left:17.16px;top:167px;font-size:13.81px;color:#ffffff;transform:scaleX(1.0679);-webkit-text-stroke:0.2px #ffffff;">ΔE 2000</div>
<div class="t" style="left:142.08px;top:167px;font-size:13.81px;color:#ffffff;transform:scaleX(1.0800);-webkit-text-stroke:0.2px #ffffff;">1.0847</div>
<div class="t" style="left:230.85px;top:167px;font-size:13.81px;color:#ffffff;transform:scaleX(1.0800);-webkit-text-stroke:0.2px #ffffff;">2.1193</div>
<div class="t" style="left:310.48px;top:167px;font-size:13.81px;color:#ffffff;transform:scaleX(1.0800);-webkit-text-stroke:0.2px #ffffff;">1.4076</div>
<div class="t" style="left:390.48px;top:167px;font-size:13.81px;color:#ffffff;transform:scaleX(1.0800);-webkit-text-stroke:0.2px #ffffff;">1.3735</div>
<div class="t" style="left:470.48px;top:167px;font-size:13.81px;color:#ffffff;transform:scaleX(1.0800);-webkit-text-stroke:0.2px #ffffff;">1.5542</div>
<div class="t" style="left:550.48px;top:167px;font-size:13.81px;color:#ffffff;transform:scaleX(1.0800);-webkit-text-stroke:0.2px #ffffff;">1.6929</div>
<div class="t" style="left:630.85px;top:167px;font-size:13.81px;color:#ffffff;transform:scaleX(1.0800);-webkit-text-stroke:0.2px #ffffff;">2.0986</div>
<div class="t" style="left:710.85px;top:167px;font-size:13.81px;color:#ffffff;transform:scaleX(1.0800);-webkit-text-stroke:0.2px #ffffff;">2.4212</div>
<div class="t" style="left:790.85px;top:167px;font-size:13.81px;color:#ffffff;transform:scaleX(1.0800);-webkit-text-stroke:0.2px #ffffff;">2.9060</div>
<div class="t" style="left:870.85px;top:167px;font-size:13.81px;color:#ffffff;transform:scaleX(1.0800);-webkit-text-stroke:0.2px #ffffff;">2.8821</div>
<div class="t" style="left:951.00px;top:167px;font-size:13.81px;color:#ffffff;transform:scaleX(1.0800);-webkit-text-stroke:0.2px #ffffff;">3.4898</div>
</div>
<div style="position:absolute;left:615px;top:789px;width:976px;height:15px;background:#5c5c5c;border-radius:0 0 3px 3px;"></div>
<div style="position:absolute;left:632px;top:789.8px;width:907px;height:12.8px;background:#444444;border-radius:6.4px;"></div>
<svg style="left:616.5px;top:790px" width="14" height="13" viewBox="0 0 14 13"><rect x="0.5" y="0.5" width="12.6" height="11.4" rx="2" fill="#727272" stroke="#8a8a8a"/><path d="M9.500 2.300v8.200l-5.300-4.100z" fill="#363636"/></svg>
<svg style="left:1577px;top:790px" width="14" height="13" viewBox="0 0 14 13"><rect x="0.5" y="0.5" width="12.6" height="11.4" rx="2" fill="#727272" stroke="#8a8a8a"/><path d="M4.300 2.300v8.200l5.300-4.100z" fill="#363636"/></svg>
<div style="position:absolute;left:0px;top:807px;width:1600px;height:63px;background:#2a2a2a;"></div>
<div style="position:absolute;left:1px;top:808px;width:114.2px;height:61px;background:linear-gradient(#a4a4a4 0%,#8a8a8a 33%,#6a6a6a 75%,#545454 100%);border-radius:4px;"></div>
<div style="position:absolute;left:6px;top:813px;width:104.2px;height:36px;background:rgb(0,0,0);border-radius:3px;box-shadow:0 0 1px rgba(0,0,0,0.5);"></div>
<div class="t" style="left:55.03px;top:855px;font-size:10.9px;color:#1e1e1e;transform:scaleX(1.0400);-webkit-text-stroke:0.35px #1e1e1e;">0</div>
<div style="position:absolute;left:116.9px;top:808px;width:114.2px;height:61px;background:linear-gradient(#a4a4a4 0%,#8a8a8a 33%,#6a6a6a 75%,#545454 100%);border-radius:4px;"></div>
<div style="position:absolute;left:121.9px;top:813px;width:104.2px;height:36px;background:rgb(26,26,26);border-radius:3px;box-shadow:0 0 1px rgba(0,0,0,0.5);"></div>
<div class="t" style="left:167.58px;top:855px;font-size:10.9px;color:#1e1e1e;transform:scaleX(1.0400);-webkit-text-stroke:0.35px #1e1e1e;">10</div>
<div style="position:absolute;left:232.8px;top:808px;width:114.2px;height:61px;background:linear-gradient(#a4a4a4 0%,#8a8a8a 33%,#6a6a6a 75%,#545454 100%);border-radius:4px;"></div>
<div style="position:absolute;left:237.8px;top:813px;width:104.2px;height:36px;background:rgb(51,51,51);border-radius:3px;box-shadow:0 0 1px rgba(0,0,0,0.5);"></div>
<div class="t" style="left:283.62px;top:855px;font-size:10.9px;color:#1e1e1e;transform:scaleX(1.0400);-webkit-text-stroke:0.35px #1e1e1e;">20</div>
<div style="position:absolute;left:348.7px;top:808px;width:114.2px;height:61px;background:linear-gradient(#a4a4a4 0%,#8a8a8a 33%,#6a6a6a 75%,#545454 100%);border-radius:4px;"></div>
<div style="position:absolute;left:353.7px;top:813px;width:104.2px;height:36px;background:rgb(76,76,76);border-radius:3px;box-shadow:0 0 1px rgba(0,0,0,0.5);"></div>
<div class="t" style="left:399.58px;top:855px;font-size:10.9px;color:#1e1e1e;transform:scaleX(1.0400);-webkit-text-stroke:0.35px #1e1e1e;">30</div>
<div style="position:absolute;left:464.6px;top:808px;width:114.2px;height:61px;background:linear-gradient(#a4a4a4 0%,#8a8a8a 33%,#6a6a6a 75%,#545454 100%);border-radius:4px;"></div>
<div style="position:absolute;left:469.6px;top:813px;width:104.2px;height:36px;background:rgb(102,102,102);border-radius:3px;box-shadow:0 0 1px rgba(0,0,0,0.5);"></div>
<div class="t" style="left:515.59px;top:855px;font-size:10.9px;color:#1e1e1e;transform:scaleX(1.0400);-webkit-text-stroke:0.35px #1e1e1e;">40</div>
<div style="position:absolute;left:580.5px;top:808px;width:114.2px;height:61px;background:linear-gradient(#a4a4a4 0%,#8a8a8a 33%,#6a6a6a 75%,#545454 100%);border-radius:4px;"></div>
<div style="position:absolute;left:585.5px;top:813px;width:104.2px;height:36px;background:rgb(127,127,127);border-radius:3px;box-shadow:0 0 1px rgba(0,0,0,0.5);"></div>
<div class="t" style="left:631.38px;top:855px;font-size:10.9px;color:#1e1e1e;transform:scaleX(1.0400);-webkit-text-stroke:0.35px #1e1e1e;">50</div>
<div style="position:absolute;left:696.4px;top:808px;width:114.2px;height:61px;background:linear-gradient(#a4a4a4 0%,#8a8a8a 33%,#6a6a6a 75%,#545454 100%);border-radius:4px;"></div>
<div style="position:absolute;left:701.4px;top:813px;width:104.2px;height:36px;background:rgb(153,153,153);border-radius:3px;box-shadow:0 0 1px rgba(0,0,0,0.5);"></div>
<div class="t" style="left:747.22px;top:855px;font-size:10.9px;color:#1e1e1e;transform:scaleX(1.0400);-webkit-text-stroke:0.35px #1e1e1e;">60</div>
<div style="position:absolute;left:812.3px;top:808px;width:114.2px;height:61px;background:linear-gradient(#a4a4a4 0%,#8a8a8a 33%,#6a6a6a 75%,#545454 100%);border-radius:4px;"></div>
<div style="position:absolute;left:817.3px;top:813px;width:104.2px;height:36px;background:rgb(178,178,178);border-radius:3px;box-shadow:0 0 1px rgba(0,0,0,0.5);"></div>
<div class="t" style="left:863.12px;top:855px;font-size:10.9px;color:#1e1e1e;transform:scaleX(1.0400);-webkit-text-stroke:0.35px #1e1e1e;">70</div>
<div style="position:absolute;left:928.2px;top:808px;width:114.2px;height:61px;background:linear-gradient(#a4a4a4 0%,#8a8a8a 33%,#6a6a6a 75%,#545454 100%);border-radius:4px;"></div>
<div style="position:absolute;left:933.2px;top:813px;width:104.2px;height:36px;background:rgb(204,204,204);border-radius:3px;box-shadow:0 0 1px rgba(0,0,0,0.5);"></div>
<div class="t" style="left:979.05px;top:855px;font-size:10.9px;color:#1e1e1e;transform:scaleX(1.0400);-webkit-text-stroke:0.35px #1e1e1e;">80</div>
<div style="position:absolute;left:1044.1px;top:808px;width:114.2px;height:61px;background:linear-gradient(#a4a4a4 0%,#8a8a8a 33%,#6a6a6a 75%,#545454 100%);border-radius:4px;"></div>
<div style="position:absolute;left:1049.1px;top:813px;width:104.2px;height:36px;background:rgb(229,229,229);border-radius:3px;box-shadow:0 0 1px rgba(0,0,0,0.5);"></div>
<div class="t" style="left:1094.95px;top:855px;font-size:10.9px;color:#1e1e1e;transform:scaleX(1.0400);-webkit-text-stroke:0.35px #1e1e1e;">90</div>
<div style="position:absolute;left:1160px;top:808px;width:114.2px;height:61px;background:linear-gradient(#222,#383838);border-radius:4px;"></div>
<div style="position:absolute;left:1165px;top:813px;width:104.2px;height:36px;background:#ffffff;border-radius:3px;"></div>
<div class="t" style="left:1207.52px;top:855px;font-size:11.05px;color:#ffffff;transform:scaleX(1.0400);font-weight:bold;">100</div>
<div style="position:absolute;left:1277px;top:808px;width:48px;height:18.2px;background:linear-gradient(#a4a4a4,#8c8c8c);border-radius:4px 4px 0 0;"></div>
<div style="position:absolute;left:1277px;top:827.3px;width:48px;height:41.4px;background:linear-gradient(#8a8a8a 0%,#6a6a6a 60%,#545454 100%);border-radius:0 0 4px 4px;"></div>
<svg style="left:1277px;top:808px" width="48" height="62" viewBox="0 0 48 62">
<defs><linearGradient id="ug" x1="0" y1="0" x2="0" y2="1"><stop offset="0" stop-color="#7e7e7e"/><stop offset="1" stop-color="#a8a8a8"/></linearGradient>
<linearGradient id="sg" x1="0" y1="0" x2="0" y2="1"><stop offset="0" stop-color="#b4b4b4"/><stop offset="0.5" stop-color="#a0a0a0"/><stop offset="0.5" stop-color="#6e6e6e"/><stop offset="1" stop-color="#8a8a8a"/></linearGradient></defs>
<circle cx="24.300" cy="8.600" r="8" fill="url(#ug)"/><path d="M19.300 11h10l-5-5.500z" fill="#3a3a3a"/>
<rect x="9.300" y="25.300" width="29.400" height="29.400" rx="4.500" fill="url(#sg)" stroke="#2c2c2c" stroke-width="2.700"/>
<rect x="17.2" y="33.2" width="13.6" height="13.6" fill="#000"/></svg>
<div style="position:absolute;left:1326.3px;top:808px;width:45px;height:30px;background:linear-gradient(#a4a4a4 0%,#8a8a8a 33%,#6a6a6a 75%,#545454 100%);border-radius:4px 0 0 0;"></div>
<div style="position:absolute;left:1372.5px;top:808px;width:44.3px;height:30px;background:linear-gradient(#a4a4a4 0%,#8a8a8a 33%,#6a6a6a 75%,#545454 100%);"></div>
<div style="position:absolute;left:1418px;top:808px;width:43.8px;height:30px;background:linear-gradient(#a4a4a4 0%,#8a8a8a 33%,#6a6a6a 75%,#545454 100%);"></div>
<div style="position:absolute;left:1463px;top:808px;width:43.8px;height:30px;background:linear-gradient(#a4a4a4 0%,#8a8a8a 33%,#6a6a6a 75%,#545454 100%);"></div>
<div style="position:absolute;left:1508px;top:808px;width:43.8px;height:30px;background:linear-gradient(#a4a4a4 0%,#8a8a8a 33%,#6a6a6a 75%,#545454 100%);"></div>
<div style="position:absolute;left:1553px;top:808px;width:45.3px;height:30px;background:linear-gradient(#3c3c3c,#262626);border-radius:0 4px 0 0;"></div>
<div style="position:absolute;left:1326.3px;top:839.3px;width:135.7px;height:29.4px;background:linear-gradient(#a4a4a4 0%,#8a8a8a 33%,#6a6a6a 75%,#545454 100%);border-radius:4px 0 0 4px;"></div>
<div style="position:absolute;left:1463.2px;top:839.3px;width:135.6px;height:29.4px;background:linear-gradient(#a4a4a4 0%,#8a8a8a 33%,#6a6a6a 75%,#545454 100%);border-radius:0 4px 4px 0;"></div>
<svg width="0" height="0" style="left:0;top:0"><defs><linearGradient id="kg" x1="0" y1="0" x2="0" y2="1"><stop offset="0" stop-color="#6e6e6e"/><stop offset="1" stop-color="#a4a4a4"/></linearGradient><linearGradient id="kd" x1="0" y1="0" x2="0" y2="1"><stop offset="0" stop-color="#1e1e1e"/><stop offset="1" stop-color="#3a3a3a"/></linearGradient></defs></svg>
<svg style="left:1338.6px;top:812.8px" width="20" height="20" viewBox="0 0 20 20"><circle cx="10" cy="10" r="10" fill="url(#kg)"/><rect x="5.900" y="5.700" width="8.200" height="8.200" fill="#2a2a2a"/></svg>
<svg style="left:1385px;top:812.8px" width="20" height="20" viewBox="0 0 20 20"><circle cx="10" cy="10" r="10" fill="url(#kg)"/><path d="M6.800 4.900v10.200l8.600-5.100z" fill="#2a2a2a"/></svg>
<svg style="left:1430px;top:812.8px" width="20" height="20" viewBox="0 0 20 20"><circle cx="10" cy="10" r="10" fill="url(#kg)"/><path d="M7.500 6.300H5.200V15.300H7.500M12.500 6.300H14.800V15.300H12.500" fill="none" stroke="#2a2a2a" stroke-width="2.200"/><rect x="7.700" y="9.900" width="1.700" height="1.800" fill="#2a2a2a"/><rect x="10.600" y="9.900" width="1.700" height="1.800" fill="#2a2a2a"/></svg>
<svg style="left:1475px;top:812.8px" width="20" height="20" viewBox="0 0 20 20"><circle cx="10" cy="10" r="10" fill="url(#kg)"/><path d="M10 10.200c-1.400-2-2.400-2.700-3.700-2.700a2.700 2.700 0 0 0 0 5.400c1.300 0 2.300-.7 3.700-2.700s2.400-2.700 3.700-2.700a2.700 2.700 0 0 1 0 5.400c-1.300 0-2.300-.7-3.700-2.700z" fill="none" stroke="#2a2a2a" stroke-width="1.8"/></svg>
<svg style="left:1520px;top:812.8px" width="20" height="20" viewBox="0 0 20 20"><circle cx="10" cy="10" r="10" fill="url(#kg)"/><path d="M5.4 9.2a4.8 4.8 0 0 1 8.200-2.600M14.600 10.800a4.800 4.800 0 0 1-8.200 2.600" fill="none" stroke="#2a2a2a" stroke-width="2.1"/><path d="M15.500 3.400v4.600h-4.600z M4.500 16.600v-4.600h4.600z" fill="#2a2a2a"/></svg>
<svg style="left:1566px;top:812.8px" width="20" height="20" viewBox="0 0 20 20"><circle cx="10" cy="10" r="10" fill="url(#kd)"/></svg>
<svg style="left:1347px;top:844px" width="20" height="20" viewBox="0 0 20 20"><circle cx="10" cy="10" r="10" fill="url(#kg)"/><path d="M9.500 5.500l-4 4.500 4 4.500M14 5.500l-4 4.500 4 4.500" fill="none" stroke="#2a2a2a" stroke-width="1.5"/></svg>
<svg style="left:1560px;top:844px" width="20" height="20" viewBox="0 0 20 20"><circle cx="10" cy="10" r="10" fill="url(#kg)"/><path d="M6 5.500l4 4.500-4 4.500M10.500 5.500l4 4.500-4 4.500" fill="none" stroke="#2a2a2a" stroke-width="1.5"/></svg>
<div class="t" style="left:1381.72px;top:843px;font-size:22.67px;color:#282828;transform:scaleX(1.0365);-webkit-text-stroke:0.4px #282828;">Back</div>
<div class="t" style="left:1488.52px;top:843px;font-size:22.67px;color:#282828;transform:scaleX(1.1487);-webkit-text-stroke:0.4px #282828;">Next</div>
</div>
</body>
</html>
